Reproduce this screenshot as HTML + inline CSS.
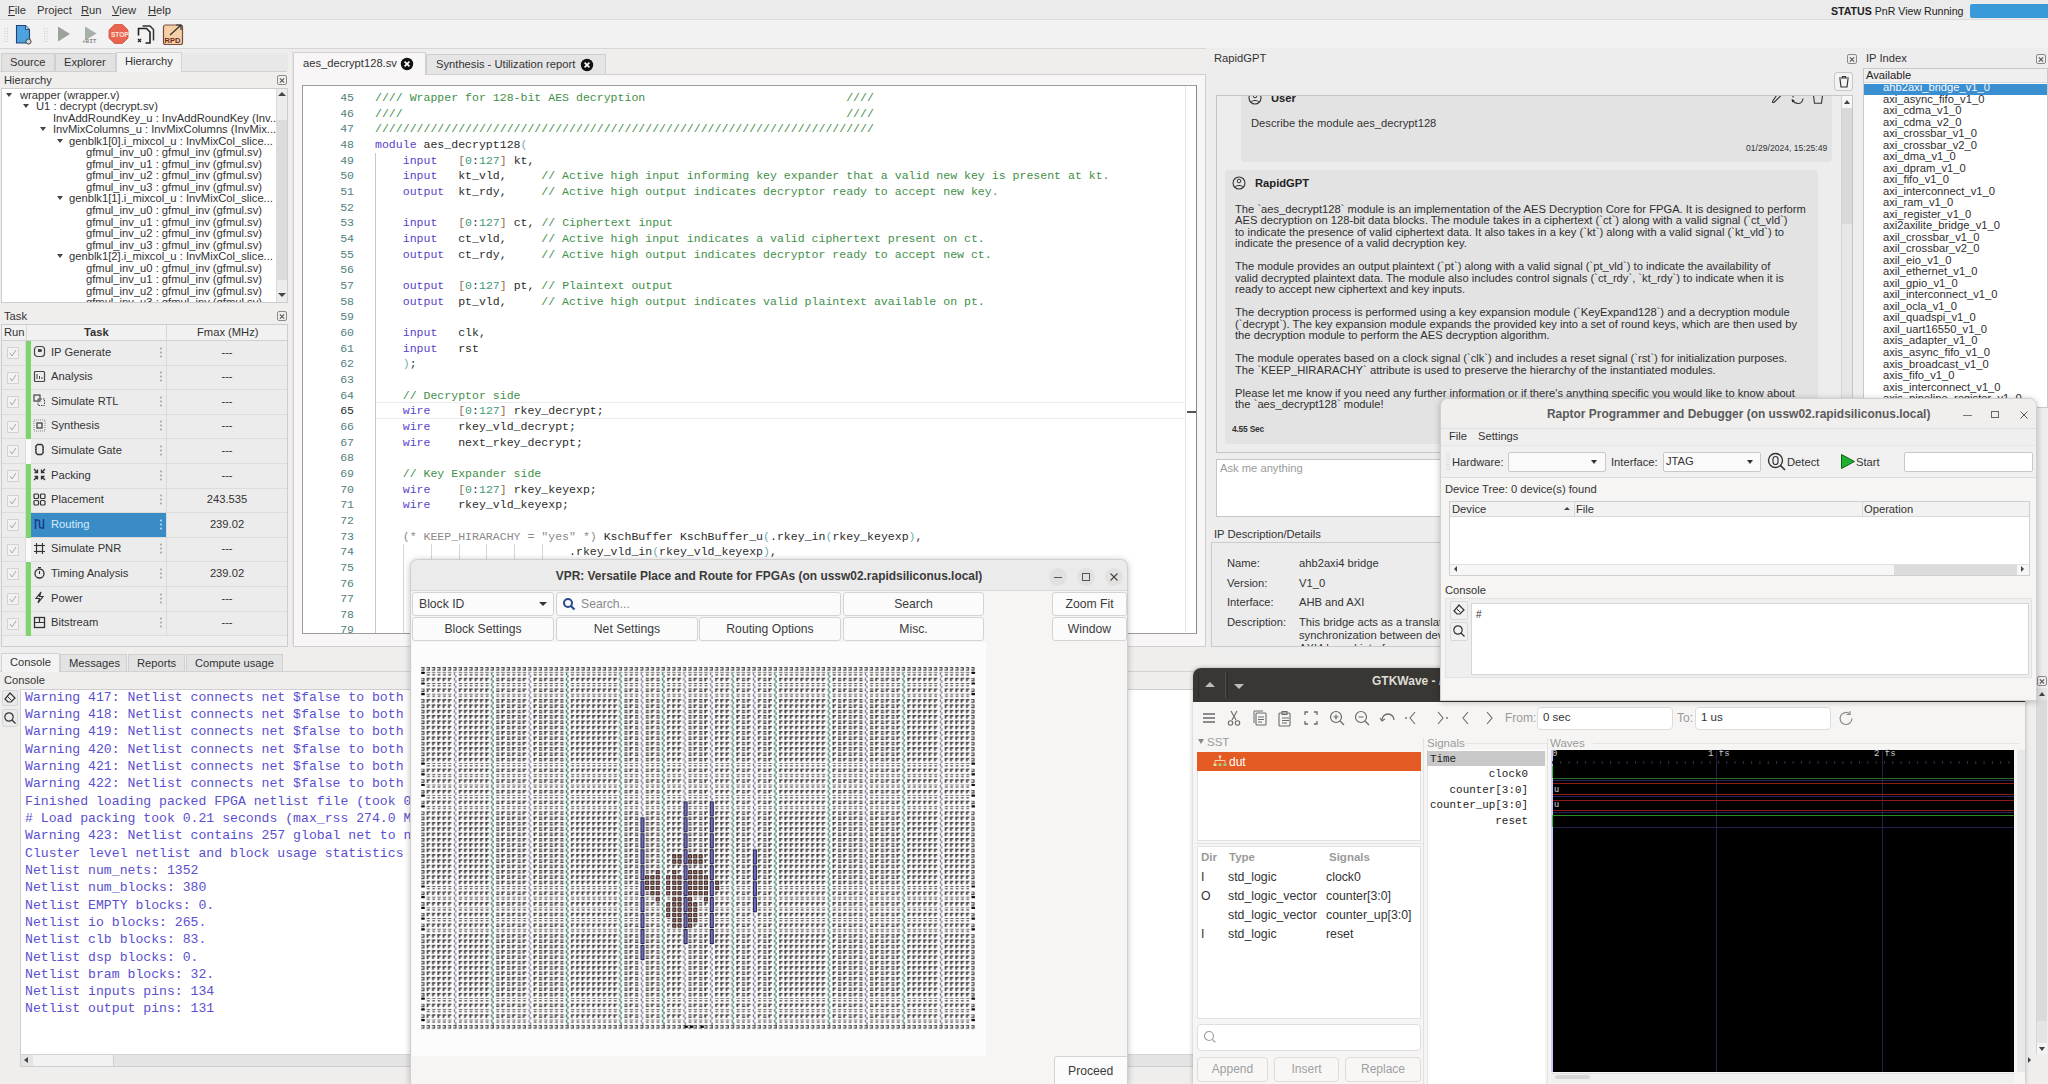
<!DOCTYPE html>
<html><head><meta charset="utf-8">
<style>
*{box-sizing:border-box;margin:0;padding:0}
html,body{width:2048px;height:1084px;overflow:hidden;background:#efeeed;font-family:"Liberation Sans",sans-serif;font-size:11.2px;color:#333}
.a{position:absolute}
.t{position:absolute;white-space:pre;line-height:1}
.mono{font-family:"Liberation Mono",monospace}
.box{position:absolute;background:#fff;border:1px solid #c9c9c9}
.xbtn{position:absolute;width:10px;height:10px;border:1px solid #8a8a8a;border-radius:2px}
.xbtn:before,.xbtn:after{content:"";position:absolute;left:1px;top:3.5px;width:6px;height:1px;background:#555;transform:rotate(45deg)}
.xbtn:after{transform:rotate(-45deg)}
</style></head><body>

<!-- MENUBAR -->
<div class="a" style="left:0;top:0;width:2048px;height:20px;background:#ebebeb;border-bottom:1px solid #dcdcdc"></div>
<div class="t" style="left:8px;top:5px"><u>F</u>ile</div>
<div class="t" style="left:37px;top:5px">Project</div>
<div class="t" style="left:81px;top:5px"><u>R</u>un</div>
<div class="t" style="left:112px;top:5px"><u>V</u>iew</div>
<div class="t" style="left:148px;top:5px"><u>H</u>elp</div>
<div class="t" style="left:1831px;top:5.5px;font-size:10.6px;color:#222"><b>STATUS</b> PnR View Running</div>
<div class="a" style="left:1970px;top:4px;width:78px;height:14px;background:#3a9ad9;border-radius:2px 0 0 2px"></div>

<!-- TOOLBAR -->
<div class="a" style="left:0;top:20px;width:2048px;height:29px;background:#f3f2f2;border-bottom:1px solid #d6d6d6"></div>
<svg class="a" style="left:0;top:20px" width="200" height="28">
<path d="M5 8v14M7.5 8v14" stroke="#c9c9c9" stroke-width="1" stroke-dasharray="1 1.6"/>
<path d="M16.5 5.5h9l4 4v13.5h-13z" fill="#4ba4de" stroke="#263f77" stroke-width="1.1"/>
<path d="M25.5 5.5v4h4" fill="#9fd0f0" stroke="#263f77" stroke-width="0.9"/>
<circle cx="28.5" cy="21.5" r="2.6" fill="#cfd6d8" stroke="#444" stroke-width="1"/>
<path d="M44.5 8v14M47 8v14" stroke="#c9c9c9" stroke-width="1" stroke-dasharray="1 1.6"/>
<path d="M58 6.5l12 7.5-12 7.5z" fill="#9aa29a"/>
<path d="M85 6.5l11.5 7-11.5 7z" fill="#a6b0a6"/>
<text x="82" y="23" font-family="Liberation Mono" font-size="6" font-weight="bold" fill="#8a8a8a">+BIT</text>
<path d="M114.5 4.5h8l5.5 5.5v8l-5.5 5.5h-8l-5.5-5.5v-8z" fill="#e86450" stroke="#d4503e" stroke-width="0.8"/>
<text x="111" y="16.5" font-family="Liberation Sans" font-size="6.5" font-weight="bold" fill="#fde6e0">STOP</text>
<path d="M142.5 6h7.5l3.5 3.5v11" fill="none" stroke="#333" stroke-width="1.5"/>
<path d="M138.5 15.5v-7h8l3.5 3.5v11h-4.5" fill="none" stroke="#222" stroke-width="1.6"/>
<path d="M138 19l3 3M141 19l-3 3" stroke="#222" stroke-width="1.3"/>
<rect x="163.5" y="5" width="19" height="19.5" rx="2" fill="#f5cfa6" stroke="#7a4e3e" stroke-width="1.2"/>
<path d="M170 15l11-10M176 5h5v5" fill="none" stroke="#333" stroke-width="1.2"/>
<text x="164.5" y="22.5" font-family="Liberation Sans" font-size="7.5" font-weight="bold" fill="#6a2a1a">RPD</text>
</svg>

<!-- LEFT PANEL -->
<!-- LEFT PANEL -->
<div class="a" style="left:0;top:50px;width:293px;height:594px;background:#efeeed;border-right:1px solid #e2e2e2"></div>
<!-- tabs -->
<div class="a" style="left:182px;top:53px;width:106px;height:18px;background:#e9e8e8"></div><div class="a" style="left:0;top:71px;width:287px;height:1px;background:#d0d0d0"></div>
<div class="a" style="left:1px;top:53px;width:54px;height:18px;background:#e2e2e2;border:1px solid #cfcfcf;border-bottom:none"></div>
<div class="a" style="left:55px;top:53px;width:61px;height:18px;background:#e2e2e2;border:1px solid #cfcfcf;border-bottom:none"></div>
<div class="a" style="left:116px;top:52px;width:66px;height:20px;background:#f3f2f2;border:1px solid #d3d3d3;border-bottom:none"></div>
<div class="t" style="left:10px;top:57px">Source</div>
<div class="t" style="left:64px;top:57px">Explorer</div>
<div class="t" style="left:125px;top:56px">Hierarchy</div>
<div class="t" style="left:4px;top:75px">Hierarchy</div>
<div class="xbtn" style="left:277px;top:75px"></div>
<!-- tree -->
<div class="box" style="left:1px;top:88px;width:287px;height:215px;border-color:#cdcdcd"></div>
<div class="a" style="left:276px;top:89px;width:11px;height:213px;background:#ececec;border-left:1px solid #dcdcdc"></div>
<div class="a" style="left:277px;top:120px;width:10px;height:160px;background:#dcdcdc"></div>
<div class="a" style="left:278px;top:92px;width:0;height:0;border-left:4px solid transparent;border-right:4px solid transparent;border-bottom:4px solid #444"></div>
<div class="a" style="left:278px;top:293px;width:0;height:0;border-left:4px solid transparent;border-right:4px solid transparent;border-top:4px solid #444"></div>
<div id="tree" class="a" style="left:2px;top:89px;width:274px;height:213px;overflow:hidden;color:#333;font-size:11.2px">
<div class="t" style="left:18px;top:0.5px">wrapper (wrapper.v)</div>
<div class="a" style="left:4px;top:3.5px;border-left:3.5px solid transparent;border-right:3.5px solid transparent;border-top:4px solid #444"></div>
<div class="t" style="left:34px;top:12.0px">U1 : decrypt (decrypt.sv)</div>
<div class="a" style="left:21px;top:15.0px;border-left:3.5px solid transparent;border-right:3.5px solid transparent;border-top:4px solid #444"></div>
<div class="t" style="left:51px;top:23.6px">InvAddRoundKey_u : InvAddRoundKey (Inv...</div>
<div class="t" style="left:51px;top:35.2px">InvMixColumns_u : InvMixColumns (InvMix...</div>
<div class="a" style="left:38px;top:38.2px;border-left:3.5px solid transparent;border-right:3.5px solid transparent;border-top:4px solid #444"></div>
<div class="t" style="left:67px;top:46.7px">genblk1[0].i_mixcol_u : InvMixCol_slice...</div>
<div class="a" style="left:55px;top:49.7px;border-left:3.5px solid transparent;border-right:3.5px solid transparent;border-top:4px solid #444"></div>
<div class="t" style="left:84px;top:58.2px">gfmul_inv_u0 : gfmul_inv (gfmul.sv)</div>
<div class="t" style="left:84px;top:69.8px">gfmul_inv_u1 : gfmul_inv (gfmul.sv)</div>
<div class="t" style="left:84px;top:81.4px">gfmul_inv_u2 : gfmul_inv (gfmul.sv)</div>
<div class="t" style="left:84px;top:92.9px">gfmul_inv_u3 : gfmul_inv (gfmul.sv)</div>
<div class="t" style="left:67px;top:104.4px">genblk1[1].i_mixcol_u : InvMixCol_slice...</div>
<div class="a" style="left:55px;top:107.4px;border-left:3.5px solid transparent;border-right:3.5px solid transparent;border-top:4px solid #444"></div>
<div class="t" style="left:84px;top:116.0px">gfmul_inv_u0 : gfmul_inv (gfmul.sv)</div>
<div class="t" style="left:84px;top:127.6px">gfmul_inv_u1 : gfmul_inv (gfmul.sv)</div>
<div class="t" style="left:84px;top:139.1px">gfmul_inv_u2 : gfmul_inv (gfmul.sv)</div>
<div class="t" style="left:84px;top:150.7px">gfmul_inv_u3 : gfmul_inv (gfmul.sv)</div>
<div class="t" style="left:67px;top:162.2px">genblk1[2].i_mixcol_u : InvMixCol_slice...</div>
<div class="a" style="left:55px;top:165.2px;border-left:3.5px solid transparent;border-right:3.5px solid transparent;border-top:4px solid #444"></div>
<div class="t" style="left:84px;top:173.8px">gfmul_inv_u0 : gfmul_inv (gfmul.sv)</div>
<div class="t" style="left:84px;top:185.3px">gfmul_inv_u1 : gfmul_inv (gfmul.sv)</div>
<div class="t" style="left:84px;top:196.9px">gfmul_inv_u2 : gfmul_inv (gfmul.sv)</div>
<div class="t" style="left:84px;top:208.4px">gfmul_inv_u3 : gfmul_inv (gfmul.sv)</div>
</div>
<!-- task dock -->
<div class="t" style="left:4px;top:311px">Task</div>
<div class="xbtn" style="left:277px;top:311px"></div>
<div class="a" style="left:1px;top:324px;width:287px;height:323px;background:#efefef;border:1px solid #cdcdcd"></div>
<div class="a" style="left:2px;top:325px;width:285px;height:16px;background:#f1f1f1;border-bottom:1px solid #d0d0d0"></div>
<div class="a" style="left:26px;top:325px;width:1px;height:16px;background:#d6d6d6"></div>
<div class="a" style="left:166px;top:325px;width:1px;height:16px;background:#d6d6d6"></div>
<div class="t" style="left:4px;top:327px">Run</div>
<div class="t" style="left:84px;top:327px;font-weight:bold">Task</div>
<div class="t" style="left:197px;top:327px">Fmax (MHz)</div>
<div class="a" style="left:2px;top:341.0px;width:285px;height:24.6px;background:#ececec;border-bottom:1px solid #dcdcdc"></div>
<div class="a" style="left:25px;top:341.0px;width:1px;height:24.6px;background:#dadada"></div>
<div class="a" style="left:166px;top:341.0px;width:1px;height:24.6px;background:#dadada"></div>
<div class="a" style="left:7px;top:347.0px;width:12px;height:12px;background:#f2f2f2;border:1px solid #d2d2d2;border-radius:1px"></div>
<svg class="a" style="left:8px;top:348.0px" width="10" height="10"><path d="M2 5l2 3l4-6" stroke="#a8a8a8" stroke-width="1" fill="none"/></svg>
<div class="a" style="left:26px;top:341.0px;width:5px;height:24.6px;background:#7fd56b"></div>
<svg class="a" style="left:33px;top:345.0px" width="13" height="13"><rect x="1.5" y="1.5" width="10" height="10" rx="3" fill="none" stroke="#444" stroke-width="1.2"/><path d="M5 4h2.5a1.5 1.5 0 0 1 0 3H5z" fill="#444"/></svg>
<div class="t" style="left:51px;top:346.5px;">IP Generate</div>
<svg class="a" style="left:159px;top:346.5px" width="4" height="12"><circle cx="2" cy="1.5" r="0.9" fill="#999"/><circle cx="2" cy="5.5" r="0.9" fill="#999"/><circle cx="2" cy="9.5" r="0.9" fill="#999"/></svg>
<div class="t" style="left:167px;width:120px;text-align:center;top:346.5px">---</div>
<div class="a" style="left:2px;top:365.6px;width:285px;height:24.6px;background:#ececec;border-bottom:1px solid #dcdcdc"></div>
<div class="a" style="left:25px;top:365.6px;width:1px;height:24.6px;background:#dadada"></div>
<div class="a" style="left:166px;top:365.6px;width:1px;height:24.6px;background:#dadada"></div>
<div class="a" style="left:7px;top:371.6px;width:12px;height:12px;background:#f2f2f2;border:1px solid #d2d2d2;border-radius:1px"></div>
<svg class="a" style="left:8px;top:372.6px" width="10" height="10"><path d="M2 5l2 3l4-6" stroke="#a8a8a8" stroke-width="1" fill="none"/></svg>
<div class="a" style="left:26px;top:365.6px;width:5px;height:24.6px;background:#7fd56b"></div>
<svg class="a" style="left:33px;top:369.6px" width="13" height="13"><rect x="1.5" y="1.5" width="10" height="10" rx="1" fill="none" stroke="#444" stroke-width="1.2"/><path d="M4 4v5M6.5 6v3M9 7v2" stroke="#444" stroke-width="1"/></svg>
<div class="t" style="left:51px;top:371.1px;">Analysis</div>
<svg class="a" style="left:159px;top:371.1px" width="4" height="12"><circle cx="2" cy="1.5" r="0.9" fill="#999"/><circle cx="2" cy="5.5" r="0.9" fill="#999"/><circle cx="2" cy="9.5" r="0.9" fill="#999"/></svg>
<div class="t" style="left:167px;width:120px;text-align:center;top:371.1px">---</div>
<div class="a" style="left:2px;top:390.2px;width:285px;height:24.6px;background:#ececec;border-bottom:1px solid #dcdcdc"></div>
<div class="a" style="left:25px;top:390.2px;width:1px;height:24.6px;background:#dadada"></div>
<div class="a" style="left:166px;top:390.2px;width:1px;height:24.6px;background:#dadada"></div>
<div class="a" style="left:7px;top:396.2px;width:12px;height:12px;background:#f2f2f2;border:1px solid #d2d2d2;border-radius:1px"></div>
<svg class="a" style="left:8px;top:397.2px" width="10" height="10"><path d="M2 5l2 3l4-6" stroke="#a8a8a8" stroke-width="1" fill="none"/></svg>
<div class="a" style="left:26px;top:390.2px;width:5px;height:24.6px;background:#7fd56b"></div>
<svg class="a" style="left:33px;top:394.2px" width="13" height="13"><rect x="1" y="1" width="6" height="6" fill="none" stroke="#444" stroke-width="1.2"/><rect x="5" y="5" width="6.5" height="6.5" fill="none" stroke="#444" stroke-width="1" stroke-dasharray="1.5 1"/></svg>
<div class="t" style="left:51px;top:395.7px;">Simulate RTL</div>
<svg class="a" style="left:159px;top:395.7px" width="4" height="12"><circle cx="2" cy="1.5" r="0.9" fill="#999"/><circle cx="2" cy="5.5" r="0.9" fill="#999"/><circle cx="2" cy="9.5" r="0.9" fill="#999"/></svg>
<div class="t" style="left:167px;width:120px;text-align:center;top:395.7px">---</div>
<div class="a" style="left:2px;top:414.8px;width:285px;height:24.6px;background:#ececec;border-bottom:1px solid #dcdcdc"></div>
<div class="a" style="left:25px;top:414.8px;width:1px;height:24.6px;background:#dadada"></div>
<div class="a" style="left:166px;top:414.8px;width:1px;height:24.6px;background:#dadada"></div>
<div class="a" style="left:7px;top:420.8px;width:12px;height:12px;background:#f2f2f2;border:1px solid #d2d2d2;border-radius:1px"></div>
<svg class="a" style="left:8px;top:421.8px" width="10" height="10"><path d="M2 5l2 3l4-6" stroke="#a8a8a8" stroke-width="1" fill="none"/></svg>
<div class="a" style="left:26px;top:414.8px;width:5px;height:24.6px;background:#7fd56b"></div>
<svg class="a" style="left:33px;top:418.8px" width="13" height="13"><rect x="1" y="1" width="11" height="11" fill="none" stroke="#888" stroke-width="1" stroke-dasharray="1 1"/><rect x="4" y="4" width="5" height="5" fill="none" stroke="#444" stroke-width="1.3"/></svg>
<div class="t" style="left:51px;top:420.3px;">Synthesis</div>
<svg class="a" style="left:159px;top:420.3px" width="4" height="12"><circle cx="2" cy="1.5" r="0.9" fill="#999"/><circle cx="2" cy="5.5" r="0.9" fill="#999"/><circle cx="2" cy="9.5" r="0.9" fill="#999"/></svg>
<div class="t" style="left:167px;width:120px;text-align:center;top:420.3px">---</div>
<div class="a" style="left:2px;top:439.4px;width:285px;height:24.6px;background:#ececec;border-bottom:1px solid #dcdcdc"></div>
<div class="a" style="left:25px;top:439.4px;width:1px;height:24.6px;background:#dadada"></div>
<div class="a" style="left:166px;top:439.4px;width:1px;height:24.6px;background:#dadada"></div>
<div class="a" style="left:7px;top:445.4px;width:12px;height:12px;background:#f2f2f2;border:1px solid #d2d2d2;border-radius:1px"></div>
<svg class="a" style="left:8px;top:446.4px" width="10" height="10"><path d="M2 5l2 3l4-6" stroke="#a8a8a8" stroke-width="1" fill="none"/></svg>
<div class="a" style="left:26px;top:439.4px;width:5px;height:24.6px;background:#fafafa"></div>
<svg class="a" style="left:33px;top:443.4px" width="13" height="13"><path d="M4.5 1.5h4l1.5 1.5v7l-1.5 1.5h-4l-1.5-1.5v-7z" stroke="#333" stroke-width="1.3" fill="none"/><path d="M2 4h1M2 6.5h1M2 9h1M10 4h1M10 6.5h1M10 9h1" stroke="#333" stroke-width="1"/></svg>
<div class="t" style="left:51px;top:444.9px;">Simulate Gate</div>
<svg class="a" style="left:159px;top:444.9px" width="4" height="12"><circle cx="2" cy="1.5" r="0.9" fill="#999"/><circle cx="2" cy="5.5" r="0.9" fill="#999"/><circle cx="2" cy="9.5" r="0.9" fill="#999"/></svg>
<div class="t" style="left:167px;width:120px;text-align:center;top:444.9px">---</div>
<div class="a" style="left:2px;top:464.0px;width:285px;height:24.6px;background:#ececec;border-bottom:1px solid #dcdcdc"></div>
<div class="a" style="left:25px;top:464.0px;width:1px;height:24.6px;background:#dadada"></div>
<div class="a" style="left:166px;top:464.0px;width:1px;height:24.6px;background:#dadada"></div>
<div class="a" style="left:7px;top:470.0px;width:12px;height:12px;background:#f2f2f2;border:1px solid #d2d2d2;border-radius:1px"></div>
<svg class="a" style="left:8px;top:471.0px" width="10" height="10"><path d="M2 5l2 3l4-6" stroke="#a8a8a8" stroke-width="1" fill="none"/></svg>
<div class="a" style="left:26px;top:464.0px;width:5px;height:24.6px;background:#7fd56b"></div>
<svg class="a" style="left:33px;top:468.0px" width="13" height="13"><path d="M1 1l3.5 3.5M12 1L8.5 4.5M1 12l3.5-3.5M12 12L8.5 8.5M1.5 4.5h3v-3M11.5 4.5h-3v-3M1.5 8.5h3v3M11.5 8.5h-3v3" stroke="#333" stroke-width="1.3" fill="none"/></svg>
<div class="t" style="left:51px;top:469.5px;">Packing</div>
<svg class="a" style="left:159px;top:469.5px" width="4" height="12"><circle cx="2" cy="1.5" r="0.9" fill="#999"/><circle cx="2" cy="5.5" r="0.9" fill="#999"/><circle cx="2" cy="9.5" r="0.9" fill="#999"/></svg>
<div class="t" style="left:167px;width:120px;text-align:center;top:469.5px">---</div>
<div class="a" style="left:2px;top:488.6px;width:285px;height:24.6px;background:#ececec;border-bottom:1px solid #dcdcdc"></div>
<div class="a" style="left:25px;top:488.6px;width:1px;height:24.6px;background:#dadada"></div>
<div class="a" style="left:166px;top:488.6px;width:1px;height:24.6px;background:#dadada"></div>
<div class="a" style="left:7px;top:494.6px;width:12px;height:12px;background:#f2f2f2;border:1px solid #d2d2d2;border-radius:1px"></div>
<svg class="a" style="left:8px;top:495.6px" width="10" height="10"><path d="M2 5l2 3l4-6" stroke="#a8a8a8" stroke-width="1" fill="none"/></svg>
<div class="a" style="left:26px;top:488.6px;width:5px;height:24.6px;background:#7fd56b"></div>
<svg class="a" style="left:33px;top:492.6px" width="13" height="13"><rect x="1" y="1" width="4.5" height="4.5" rx="1" fill="none" stroke="#333" stroke-width="1.2"/><rect x="7.5" y="1" width="4.5" height="4.5" rx="1" fill="none" stroke="#333" stroke-width="1.2"/><rect x="1" y="7.5" width="4.5" height="4.5" rx="1" fill="none" stroke="#333" stroke-width="1.2"/><rect x="7.5" y="7.5" width="4.5" height="4.5" rx="1" fill="none" stroke="#333" stroke-width="1.2"/></svg>
<div class="t" style="left:51px;top:494.1px;">Placement</div>
<svg class="a" style="left:159px;top:494.1px" width="4" height="12"><circle cx="2" cy="1.5" r="0.9" fill="#999"/><circle cx="2" cy="5.5" r="0.9" fill="#999"/><circle cx="2" cy="9.5" r="0.9" fill="#999"/></svg>
<div class="t" style="left:167px;width:120px;text-align:center;top:494.1px">243.535</div>
<div class="a" style="left:2px;top:513.2px;width:285px;height:24.6px;background:#ececec;border-bottom:1px solid #dcdcdc"></div>
<div class="a" style="left:25px;top:513.2px;width:1px;height:24.6px;background:#dadada"></div>
<div class="a" style="left:166px;top:513.2px;width:1px;height:24.6px;background:#dadada"></div>
<div class="a" style="left:7px;top:519.2px;width:12px;height:12px;background:#f2f2f2;border:1px solid #d2d2d2;border-radius:1px"></div>
<svg class="a" style="left:8px;top:520.2px" width="10" height="10"><path d="M2 5l2 3l4-6" stroke="#a8a8a8" stroke-width="1" fill="none"/></svg>
<div class="a" style="left:26px;top:513.2px;width:5px;height:24.6px;background:#7fd56b"></div>
<div class="a" style="left:31px;top:513.2px;width:135px;height:24px;background:#3a8cc6"></div>
<svg class="a" style="left:33px;top:517.2px" width="13" height="13"><path d="M2.5 12V5a2 2 0 0 1 4 0v4a2 2 0 0 0 4 0V2M2.5 5V2M10.5 12V9" stroke="#1a3f8a" stroke-width="1.5" fill="none"/></svg>
<div class="t" style="left:51px;top:518.7px;color:#d6ebff">Routing</div>
<svg class="a" style="left:159px;top:518.7px" width="4" height="12"><circle cx="2" cy="1.5" r="0.9" fill="#cfe3f5"/><circle cx="2" cy="5.5" r="0.9" fill="#cfe3f5"/><circle cx="2" cy="9.5" r="0.9" fill="#cfe3f5"/></svg>
<div class="t" style="left:167px;width:120px;text-align:center;top:518.7px">239.02</div>
<div class="a" style="left:2px;top:537.8px;width:285px;height:24.6px;background:#ececec;border-bottom:1px solid #dcdcdc"></div>
<div class="a" style="left:25px;top:537.8px;width:1px;height:24.6px;background:#dadada"></div>
<div class="a" style="left:166px;top:537.8px;width:1px;height:24.6px;background:#dadada"></div>
<div class="a" style="left:7px;top:543.8px;width:12px;height:12px;background:#f2f2f2;border:1px solid #d2d2d2;border-radius:1px"></div>
<svg class="a" style="left:8px;top:544.8px" width="10" height="10"><path d="M2 5l2 3l4-6" stroke="#a8a8a8" stroke-width="1" fill="none"/></svg>
<div class="a" style="left:26px;top:537.8px;width:5px;height:24.6px;background:#fafafa"></div>
<svg class="a" style="left:33px;top:541.8px" width="13" height="13"><rect x="3.5" y="3.5" width="6" height="6" fill="none" stroke="#333" stroke-width="1.2"/><path d="M1 3.5h2.5M9.5 3.5H12M1 9.5h2.5M9.5 9.5H12M3.5 1v2.5M9.5 1v2.5M3.5 9.5V12M9.5 9.5V12" stroke="#333" stroke-width="1.1"/></svg>
<div class="t" style="left:51px;top:543.3px;">Simulate PNR</div>
<svg class="a" style="left:159px;top:543.3px" width="4" height="12"><circle cx="2" cy="1.5" r="0.9" fill="#999"/><circle cx="2" cy="5.5" r="0.9" fill="#999"/><circle cx="2" cy="9.5" r="0.9" fill="#999"/></svg>
<div class="t" style="left:167px;width:120px;text-align:center;top:543.3px">---</div>
<div class="a" style="left:2px;top:562.4px;width:285px;height:24.6px;background:#ececec;border-bottom:1px solid #dcdcdc"></div>
<div class="a" style="left:25px;top:562.4px;width:1px;height:24.6px;background:#dadada"></div>
<div class="a" style="left:166px;top:562.4px;width:1px;height:24.6px;background:#dadada"></div>
<div class="a" style="left:7px;top:568.4px;width:12px;height:12px;background:#f2f2f2;border:1px solid #d2d2d2;border-radius:1px"></div>
<svg class="a" style="left:8px;top:569.4px" width="10" height="10"><path d="M2 5l2 3l4-6" stroke="#a8a8a8" stroke-width="1" fill="none"/></svg>
<div class="a" style="left:26px;top:562.4px;width:5px;height:24.6px;background:#7fd56b"></div>
<svg class="a" style="left:33px;top:566.4px" width="13" height="13"><circle cx="6.5" cy="7.5" r="4.5" fill="none" stroke="#333" stroke-width="1.3"/><path d="M5 1.5h3M6.5 5v3" stroke="#333" stroke-width="1.2"/></svg>
<div class="t" style="left:51px;top:567.9px;">Timing Analysis</div>
<svg class="a" style="left:159px;top:567.9px" width="4" height="12"><circle cx="2" cy="1.5" r="0.9" fill="#999"/><circle cx="2" cy="5.5" r="0.9" fill="#999"/><circle cx="2" cy="9.5" r="0.9" fill="#999"/></svg>
<div class="t" style="left:167px;width:120px;text-align:center;top:567.9px">239.02</div>
<div class="a" style="left:2px;top:587.0px;width:285px;height:24.6px;background:#ececec;border-bottom:1px solid #dcdcdc"></div>
<div class="a" style="left:25px;top:587.0px;width:1px;height:24.6px;background:#dadada"></div>
<div class="a" style="left:166px;top:587.0px;width:1px;height:24.6px;background:#dadada"></div>
<div class="a" style="left:7px;top:593.0px;width:12px;height:12px;background:#f2f2f2;border:1px solid #d2d2d2;border-radius:1px"></div>
<svg class="a" style="left:8px;top:594.0px" width="10" height="10"><path d="M2 5l2 3l4-6" stroke="#a8a8a8" stroke-width="1" fill="none"/></svg>
<div class="a" style="left:26px;top:587.0px;width:5px;height:24.6px;background:#7fd56b"></div>
<svg class="a" style="left:33px;top:591.0px" width="13" height="13"><path d="M8 1L3 7.5h3.5L5 12l5-6.5H6.5z" fill="none" stroke="#333" stroke-width="1.2"/></svg>
<div class="t" style="left:51px;top:592.5px;">Power</div>
<svg class="a" style="left:159px;top:592.5px" width="4" height="12"><circle cx="2" cy="1.5" r="0.9" fill="#999"/><circle cx="2" cy="5.5" r="0.9" fill="#999"/><circle cx="2" cy="9.5" r="0.9" fill="#999"/></svg>
<div class="t" style="left:167px;width:120px;text-align:center;top:592.5px">---</div>
<div class="a" style="left:2px;top:611.6px;width:285px;height:24.6px;background:#ececec;border-bottom:1px solid #dcdcdc"></div>
<div class="a" style="left:25px;top:611.6px;width:1px;height:24.6px;background:#dadada"></div>
<div class="a" style="left:166px;top:611.6px;width:1px;height:24.6px;background:#dadada"></div>
<div class="a" style="left:7px;top:617.6px;width:12px;height:12px;background:#f2f2f2;border:1px solid #d2d2d2;border-radius:1px"></div>
<svg class="a" style="left:8px;top:618.6px" width="10" height="10"><path d="M2 5l2 3l4-6" stroke="#a8a8a8" stroke-width="1" fill="none"/></svg>
<div class="a" style="left:26px;top:611.6px;width:5px;height:24.6px;background:#7fd56b"></div>
<svg class="a" style="left:33px;top:615.6px" width="13" height="13"><rect x="1.5" y="1.5" width="10" height="10" fill="none" stroke="#333" stroke-width="1.3"/><path d="M1.5 6.5h10M6.5 1.5v5" stroke="#333" stroke-width="1.2"/></svg>
<div class="t" style="left:51px;top:617.1px;">Bitstream</div>
<svg class="a" style="left:159px;top:617.1px" width="4" height="12"><circle cx="2" cy="1.5" r="0.9" fill="#999"/><circle cx="2" cy="5.5" r="0.9" fill="#999"/><circle cx="2" cy="9.5" r="0.9" fill="#999"/></svg>
<div class="t" style="left:167px;width:120px;text-align:center;top:617.1px">---</div>


<!-- EDITOR -->
<div class="a" style="left:293px;top:74px;width:913px;height:573px;background:#f8f6f7;border:1px solid #cfcfcf"></div>
<div class="a" style="left:293px;top:52px;width:133px;height:23px;background:#f8f6f7;border:1px solid #cfcfcf;border-bottom:none;border-radius:2px 2px 0 0"></div>
<div class="a" style="left:426px;top:54px;width:180px;height:20px;background:#e6e5e5;border:1px solid #d0d0d0;border-bottom:none"></div>
<div class="t" style="left:303px;top:58px">aes_decrypt128.sv</div>
<div class="t" style="left:436px;top:59px">Synthesis - Utilization report</div>
<svg class="a" style="left:400px;top:57px" width="14" height="14"><circle cx="7" cy="7" r="6.2" fill="#111"/><path d="M4.6 4.6l4.8 4.8M9.4 4.6l-4.8 4.8" stroke="#fff" stroke-width="1.6"/></svg>
<svg class="a" style="left:580px;top:57.5px" width="14" height="14"><circle cx="7" cy="7" r="6.2" fill="#111"/><path d="M4.6 4.6l4.8 4.8M9.4 4.6l-4.8 4.8" stroke="#fff" stroke-width="1.6"/></svg>
<div class="a" style="left:302px;top:85px;width:895px;height:549px;background:#fff;border:1px solid #9d9d9d;border-right-color:#888;overflow:hidden">
<div class="a" style="left:882px;top:0;width:1px;height:546px;background:#e4e4e4"></div>
<div class="a" style="left:884px;top:325px;width:10px;height:2px;background:#555"></div>
<div class="a" style="left:72px;top:316.2px;width:810px;height:16.7px;border-top:1px solid #ececec;border-bottom:1px solid #ececec"></div>
<div class="a" style="left:72px;top:66.6px;width:1px;height:485.5px;background:#c8c8c8"></div>
<div class="t mono" style="left:0;width:51px;text-align:right;top:-11.7px;font-size:11.55px;line-height:15.66px;color:#54807f">44</div>
<div class="t mono" style="left:72px;top:-11.7px;font-size:11.55px;line-height:15.66px;color:#3f8f4a">////                                                                ////</div>
<div class="t mono" style="left:0;width:51px;text-align:right;top:4.0px;font-size:11.55px;line-height:15.66px;color:#54807f">45</div>
<div class="t mono" style="left:72px;top:4.0px;font-size:11.55px;line-height:15.66px"><span style="color:#3f8f4a">//// Wrapper for 128-bit AES decryption                             ////</span></div>
<div class="t mono" style="left:0;width:51px;text-align:right;top:19.7px;font-size:11.55px;line-height:15.66px;color:#54807f">46</div>
<div class="t mono" style="left:72px;top:19.7px;font-size:11.55px;line-height:15.66px"><span style="color:#3f8f4a">////                                                                ////</span></div>
<div class="t mono" style="left:0;width:51px;text-align:right;top:35.3px;font-size:11.55px;line-height:15.66px;color:#54807f">47</div>
<div class="t mono" style="left:72px;top:35.3px;font-size:11.55px;line-height:15.66px"><span style="color:#3f8f4a">////////////////////////////////////////////////////////////////////////</span></div>
<div class="t mono" style="left:0;width:51px;text-align:right;top:51.0px;font-size:11.55px;line-height:15.66px;color:#54807f">48</div>
<div class="t mono" style="left:72px;top:51.0px;font-size:11.55px;line-height:15.66px"><span style="color:#5a3fc8">module</span><span style="color:#2b2b2b"> aes_decrypt128</span><span style="color:#6fb0b0">(</span></div>
<div class="t mono" style="left:0;width:51px;text-align:right;top:66.6px;font-size:11.55px;line-height:15.66px;color:#54807f">49</div>
<div class="t mono" style="left:72px;top:66.6px;font-size:11.55px;line-height:15.66px"><span style="color:#2b2b2b">    </span><span style="color:#5a3fc8">input</span><span style="color:#2b2b2b">   </span><span style="color:#9a6a4a">[</span><span style="color:#3f9a78">0</span><span style="color:#2b2b2b">:</span><span style="color:#3f9a78">127</span><span style="color:#9a6a4a">]</span><span style="color:#2b2b2b"> kt,</span></div>
<div class="t mono" style="left:0;width:51px;text-align:right;top:82.3px;font-size:11.55px;line-height:15.66px;color:#54807f">50</div>
<div class="t mono" style="left:72px;top:82.3px;font-size:11.55px;line-height:15.66px"><span style="color:#2b2b2b">    </span><span style="color:#5a3fc8">input</span><span style="color:#2b2b2b">   kt_vld,     </span><span style="color:#3f8f4a">// Active high input informing key expander that a valid new key is present at kt.</span></div>
<div class="t mono" style="left:0;width:51px;text-align:right;top:98.0px;font-size:11.55px;line-height:15.66px;color:#54807f">51</div>
<div class="t mono" style="left:72px;top:98.0px;font-size:11.55px;line-height:15.66px"><span style="color:#2b2b2b">    </span><span style="color:#5a3fc8">output</span><span style="color:#2b2b2b">  kt_rdy,     </span><span style="color:#3f8f4a">// Active high output indicates decryptor ready to accept new key.</span></div>
<div class="t mono" style="left:0;width:51px;text-align:right;top:113.6px;font-size:11.55px;line-height:15.66px;color:#54807f">52</div>
<div class="t mono" style="left:0;width:51px;text-align:right;top:129.3px;font-size:11.55px;line-height:15.66px;color:#54807f">53</div>
<div class="t mono" style="left:72px;top:129.3px;font-size:11.55px;line-height:15.66px"><span style="color:#2b2b2b">    </span><span style="color:#5a3fc8">input</span><span style="color:#2b2b2b">   </span><span style="color:#9a6a4a">[</span><span style="color:#3f9a78">0</span><span style="color:#2b2b2b">:</span><span style="color:#3f9a78">127</span><span style="color:#9a6a4a">]</span><span style="color:#2b2b2b"> ct, </span><span style="color:#3f8f4a">// Ciphertext input</span></div>
<div class="t mono" style="left:0;width:51px;text-align:right;top:144.9px;font-size:11.55px;line-height:15.66px;color:#54807f">54</div>
<div class="t mono" style="left:72px;top:144.9px;font-size:11.55px;line-height:15.66px"><span style="color:#2b2b2b">    </span><span style="color:#5a3fc8">input</span><span style="color:#2b2b2b">   ct_vld,     </span><span style="color:#3f8f4a">// Active high input indicates a valid ciphertext present on ct.</span></div>
<div class="t mono" style="left:0;width:51px;text-align:right;top:160.6px;font-size:11.55px;line-height:15.66px;color:#54807f">55</div>
<div class="t mono" style="left:72px;top:160.6px;font-size:11.55px;line-height:15.66px"><span style="color:#2b2b2b">    </span><span style="color:#5a3fc8">output</span><span style="color:#2b2b2b">  ct_rdy,     </span><span style="color:#3f8f4a">// Active high output indicates decryptor ready to accept new ct.</span></div>
<div class="t mono" style="left:0;width:51px;text-align:right;top:176.3px;font-size:11.55px;line-height:15.66px;color:#54807f">56</div>
<div class="t mono" style="left:0;width:51px;text-align:right;top:191.9px;font-size:11.55px;line-height:15.66px;color:#54807f">57</div>
<div class="t mono" style="left:72px;top:191.9px;font-size:11.55px;line-height:15.66px"><span style="color:#2b2b2b">    </span><span style="color:#5a3fc8">output</span><span style="color:#2b2b2b">  </span><span style="color:#9a6a4a">[</span><span style="color:#3f9a78">0</span><span style="color:#2b2b2b">:</span><span style="color:#3f9a78">127</span><span style="color:#9a6a4a">]</span><span style="color:#2b2b2b"> pt, </span><span style="color:#3f8f4a">// Plaintext output</span></div>
<div class="t mono" style="left:0;width:51px;text-align:right;top:207.6px;font-size:11.55px;line-height:15.66px;color:#54807f">58</div>
<div class="t mono" style="left:72px;top:207.6px;font-size:11.55px;line-height:15.66px"><span style="color:#2b2b2b">    </span><span style="color:#5a3fc8">output</span><span style="color:#2b2b2b">  pt_vld,     </span><span style="color:#3f8f4a">// Active high output indicates valid plaintext available on pt.</span></div>
<div class="t mono" style="left:0;width:51px;text-align:right;top:223.2px;font-size:11.55px;line-height:15.66px;color:#54807f">59</div>
<div class="t mono" style="left:0;width:51px;text-align:right;top:238.9px;font-size:11.55px;line-height:15.66px;color:#54807f">60</div>
<div class="t mono" style="left:72px;top:238.9px;font-size:11.55px;line-height:15.66px"><span style="color:#2b2b2b">    </span><span style="color:#5a3fc8">input</span><span style="color:#2b2b2b">   clk,</span></div>
<div class="t mono" style="left:0;width:51px;text-align:right;top:254.6px;font-size:11.55px;line-height:15.66px;color:#54807f">61</div>
<div class="t mono" style="left:72px;top:254.6px;font-size:11.55px;line-height:15.66px"><span style="color:#2b2b2b">    </span><span style="color:#5a3fc8">input</span><span style="color:#2b2b2b">   rst</span></div>
<div class="t mono" style="left:0;width:51px;text-align:right;top:270.2px;font-size:11.55px;line-height:15.66px;color:#54807f">62</div>
<div class="t mono" style="left:72px;top:270.2px;font-size:11.55px;line-height:15.66px"><span style="color:#2b2b2b">    </span><span style="color:#6fb0b0">)</span><span style="color:#2b2b2b">;</span></div>
<div class="t mono" style="left:0;width:51px;text-align:right;top:285.9px;font-size:11.55px;line-height:15.66px;color:#54807f">63</div>
<div class="t mono" style="left:0;width:51px;text-align:right;top:301.5px;font-size:11.55px;line-height:15.66px;color:#54807f">64</div>
<div class="t mono" style="left:72px;top:301.5px;font-size:11.55px;line-height:15.66px"><span style="color:#2b2b2b">    </span><span style="color:#3f8f4a">// Decryptor side</span></div>
<div class="t mono" style="left:0;width:51px;text-align:right;top:317.2px;font-size:11.55px;line-height:15.66px;color:#1f2f2f">65</div>
<div class="t mono" style="left:72px;top:317.2px;font-size:11.55px;line-height:15.66px"><span style="color:#2b2b2b">    </span><span style="color:#5a3fc8">wire</span><span style="color:#2b2b2b">    </span><span style="color:#9a6a4a">[</span><span style="color:#3f9a78">0</span><span style="color:#2b2b2b">:</span><span style="color:#3f9a78">127</span><span style="color:#9a6a4a">]</span><span style="color:#2b2b2b"> rkey_decrypt;</span></div>
<div class="t mono" style="left:0;width:51px;text-align:right;top:332.9px;font-size:11.55px;line-height:15.66px;color:#54807f">66</div>
<div class="t mono" style="left:72px;top:332.9px;font-size:11.55px;line-height:15.66px"><span style="color:#2b2b2b">    </span><span style="color:#5a3fc8">wire</span><span style="color:#2b2b2b">    rkey_vld_decrypt;</span></div>
<div class="t mono" style="left:0;width:51px;text-align:right;top:348.5px;font-size:11.55px;line-height:15.66px;color:#54807f">67</div>
<div class="t mono" style="left:72px;top:348.5px;font-size:11.55px;line-height:15.66px"><span style="color:#2b2b2b">    </span><span style="color:#5a3fc8">wire</span><span style="color:#2b2b2b">    next_rkey_decrypt;</span></div>
<div class="t mono" style="left:0;width:51px;text-align:right;top:364.2px;font-size:11.55px;line-height:15.66px;color:#54807f">68</div>
<div class="t mono" style="left:0;width:51px;text-align:right;top:379.8px;font-size:11.55px;line-height:15.66px;color:#54807f">69</div>
<div class="t mono" style="left:72px;top:379.8px;font-size:11.55px;line-height:15.66px"><span style="color:#2b2b2b">    </span><span style="color:#3f8f4a">// Key Expander side</span></div>
<div class="t mono" style="left:0;width:51px;text-align:right;top:395.5px;font-size:11.55px;line-height:15.66px;color:#54807f">70</div>
<div class="t mono" style="left:72px;top:395.5px;font-size:11.55px;line-height:15.66px"><span style="color:#2b2b2b">    </span><span style="color:#5a3fc8">wire</span><span style="color:#2b2b2b">    </span><span style="color:#9a6a4a">[</span><span style="color:#3f9a78">0</span><span style="color:#2b2b2b">:</span><span style="color:#3f9a78">127</span><span style="color:#9a6a4a">]</span><span style="color:#2b2b2b"> rkey_keyexp;</span></div>
<div class="t mono" style="left:0;width:51px;text-align:right;top:411.2px;font-size:11.55px;line-height:15.66px;color:#54807f">71</div>
<div class="t mono" style="left:72px;top:411.2px;font-size:11.55px;line-height:15.66px"><span style="color:#2b2b2b">    </span><span style="color:#5a3fc8">wire</span><span style="color:#2b2b2b">    rkey_vld_keyexp;</span></div>
<div class="t mono" style="left:0;width:51px;text-align:right;top:426.8px;font-size:11.55px;line-height:15.66px;color:#54807f">72</div>
<div class="t mono" style="left:0;width:51px;text-align:right;top:442.5px;font-size:11.55px;line-height:15.66px;color:#54807f">73</div>
<div class="t mono" style="left:72px;top:442.5px;font-size:11.55px;line-height:15.66px"><span style="color:#2b2b2b">    </span><span style="color:#8a8a8a">(* KEEP_HIRARACHY = &quot;yes&quot; *)</span><span style="color:#2b2b2b"> KschBuffer KschBuffer_u</span><span style="color:#6fb0b0">(</span><span style="color:#2b2b2b">.rkey_in</span><span style="color:#6fb0b0">(</span><span style="color:#2b2b2b">rkey_keyexp</span><span style="color:#6fb0b0">)</span><span style="color:#2b2b2b">,</span></div>
<div class="t mono" style="left:0;width:51px;text-align:right;top:458.1px;font-size:11.55px;line-height:15.66px;color:#54807f">74</div>
<div class="t mono" style="left:72px;top:458.1px;font-size:11.55px;line-height:15.66px"><span style="color:#2b2b2b">                            .rkey_vld_in</span><span style="color:#6fb0b0">(</span><span style="color:#2b2b2b">rkey_vld_keyexp</span><span style="color:#6fb0b0">)</span><span style="color:#2b2b2b">,</span></div>
<div class="t mono" style="left:0;width:51px;text-align:right;top:473.8px;font-size:11.55px;line-height:15.66px;color:#54807f">75</div>
<div class="t mono" style="left:0;width:51px;text-align:right;top:489.5px;font-size:11.55px;line-height:15.66px;color:#54807f">76</div>
<div class="t mono" style="left:0;width:51px;text-align:right;top:505.1px;font-size:11.55px;line-height:15.66px;color:#54807f">77</div>
<div class="t mono" style="left:0;width:51px;text-align:right;top:520.8px;font-size:11.55px;line-height:15.66px;color:#54807f">78</div>
<div class="t mono" style="left:0;width:51px;text-align:right;top:536.4px;font-size:11.55px;line-height:15.66px;color:#54807f">79</div>
<div class="a" style="left:100.0px;top:458.1px;width:1px;height:100.0px;background:#d6d6d6"></div>
<div class="a" style="left:127.8px;top:458.1px;width:1px;height:15.7px;background:#d6d6d6"></div>
<div class="a" style="left:155.6px;top:458.1px;width:1px;height:15.7px;background:#d6d6d6"></div>
<div class="a" style="left:183.4px;top:458.1px;width:1px;height:15.7px;background:#d6d6d6"></div>
<div class="a" style="left:211.2px;top:458.1px;width:1px;height:15.7px;background:#d6d6d6"></div>
<div class="a" style="left:239.0px;top:458.1px;width:1px;height:15.7px;background:#d6d6d6"></div>
</div>
<!-- RAPIDGPT -->
<div class="a" style="left:1206px;top:48px;width:656px;height:604px;background:#ededed"></div>
<div class="t" style="left:1214px;top:53px">RapidGPT</div>
<div class="xbtn" style="left:1847px;top:54px"></div>
<div class="a" style="left:1834px;top:72px;width:19px;height:19px;background:#f3f3f3;border:1px solid #c8c8c8;border-radius:3px"></div>
<svg class="a" style="left:1837px;top:74px" width="14" height="15"><path d="M3 5l1 8h6l1-8M2 4h10M5.5 4V2.5h3V4" fill="none" stroke="#333" stroke-width="1.2"/></svg>
<div class="a" style="left:1216px;top:95px;width:637px;height:358px;background:#ededed;border:1px solid #c6c6c6;overflow:hidden">
<div class="a" style="left:24px;top:-20px;width:591px;height:86px;background:#e3e3e3;border-radius:4px"></div>
<svg class="a" style="left:31px;top:-5px" width="14" height="14"><circle cx="7" cy="7" r="6" fill="none" stroke="#333" stroke-width="1.1"/><circle cx="7" cy="5" r="1.8" fill="none" stroke="#333" stroke-width="1"/><path d="M3.2 11c1-2 6.6-2 7.6 0" fill="none" stroke="#333" stroke-width="1"/></svg>
<div class="t" style="left:54px;top:-3px;font-weight:bold;color:#222">User</div>
<svg class="a" style="left:553px;top:-6px" width="70" height="16"><path d="M6.5 5.5L2.5 11.5Q2.3 13 4 12.4L11 5.5" fill="none" stroke="#333" stroke-width="1.1"/><path d="M23 10.5Q24.5 13.5 28 13.5Q32.5 13.5 33 8.5" fill="none" stroke="#333" stroke-width="1.1"/><path d="M21.5 9l3 1.2-2.2 2.2z" fill="#222"/><path d="M23 5.5v2" stroke="#333" stroke-width="1.1"/><path d="M43.5 5.5L44.5 13.2H51.5L52.5 5.5" fill="none" stroke="#333" stroke-width="1.1"/></svg>
<div class="t" style="left:34px;top:22px;color:#333">Describe the module aes_decrypt128</div>
<div class="t" style="left:529px;top:48px;font-size:8.6px;color:#333">01/29/2024, 15:25:49</div>
<div class="a" style="left:8px;top:74px;width:593px;height:274px;background:#e3e3e3;border-radius:4px"></div>
<svg class="a" style="left:15px;top:80px" width="14" height="14"><circle cx="7" cy="7" r="6" fill="none" stroke="#333" stroke-width="1.1"/><circle cx="7" cy="5" r="1.8" fill="none" stroke="#333" stroke-width="1"/><path d="M3.2 11c1-2 6.6-2 7.6 0" fill="none" stroke="#333" stroke-width="1"/></svg>
<div class="t" style="left:38px;top:82px;font-weight:bold;color:#222">RapidGPT</div>
<div class="t" style="left:18px;top:107.5px;color:#2f2f2f">The `aes_decrypt128` module is an implementation of the AES Decryption Core for FPGA. It is designed to perform</div>
<div class="t" style="left:18px;top:119.0px;color:#2f2f2f">AES decryption on 128-bit data blocks. The module takes in a ciphertext (`ct`) along with a valid signal (`ct_vld`)</div>
<div class="t" style="left:18px;top:130.5px;color:#2f2f2f">to indicate the presence of valid ciphertext data. It also takes in a key (`kt`) along with a valid signal (`kt_vld`) to</div>
<div class="t" style="left:18px;top:142.0px;color:#2f2f2f">indicate the presence of a valid decryption key.</div>
<div class="t" style="left:18px;top:165.0px;color:#2f2f2f">The module provides an output plaintext (`pt`) along with a valid signal (`pt_vld`) to indicate the availability of</div>
<div class="t" style="left:18px;top:176.5px;color:#2f2f2f">valid decrypted plaintext data. The module also includes control signals (`ct_rdy`, `kt_rdy`) to indicate when it is</div>
<div class="t" style="left:18px;top:188.0px;color:#2f2f2f">ready to accept new ciphertext and key inputs.</div>
<div class="t" style="left:18px;top:211.0px;color:#2f2f2f">The decryption process is performed using a key expansion module (`KeyExpand128`) and a decryption module</div>
<div class="t" style="left:18px;top:222.5px;color:#2f2f2f">(`decrypt`). The key expansion module expands the provided key into a set of round keys, which are then used by</div>
<div class="t" style="left:18px;top:234.0px;color:#2f2f2f">the decryption module to perform the AES decryption algorithm.</div>
<div class="t" style="left:18px;top:257.0px;color:#2f2f2f">The module operates based on a clock signal (`clk`) and includes a reset signal (`rst`) for initialization purposes.</div>
<div class="t" style="left:18px;top:268.5px;color:#2f2f2f">The `KEEP_HIRARACHY` attribute is used to preserve the hierarchy of the instantiated modules.</div>
<div class="t" style="left:18px;top:291.5px;color:#2f2f2f">Please let me know if you need any further information or if there&#x27;s anything specific you would like to know about</div>
<div class="t" style="left:18px;top:303.0px;color:#2f2f2f">the `aes_decrypt128` module!</div>
<div class="t" style="left:15px;top:329px;font-size:8.4px;color:#333;font-weight:bold;letter-spacing:-0.2px">4.55 Sec</div>
<div class="a" style="left:624px;top:0;width:12px;height:357px;background:#e6e6e6;border-left:1px solid #d4d4d4"></div>
<div class="a" style="left:625px;top:12px;width:11px;height:116px;background:#d9d9d9"></div>
<div class="a" style="left:625px;top:0;width:11px;height:12px;background:#f6f6f6"></div>
<div class="a" style="left:627px;top:4px;border-left:3.5px solid transparent;border-right:3.5px solid transparent;border-bottom:4px solid #444"></div>
</div>
<div class="a" style="left:1216px;top:459px;width:240px;height:58px;background:#fff;border:1px solid #c6c6c6"></div>
<div class="t" style="left:1220px;top:463px;color:#9a9a9a">Ask me anything</div>
<div class="t" style="left:1214px;top:529px">IP Description/Details</div>
<div class="a" style="left:1211px;top:542px;width:240px;height:105px;background:#ececec;border:1px solid #cbcbcb;overflow:hidden">
<div class="t" style="left:15px;top:15.0px;color:#333">Name:</div><div class="t" style="left:87px;top:15.0px;color:#333">ahb2axi4 bridge</div>
<div class="t" style="left:15px;top:34.7px;color:#333">Version:</div><div class="t" style="left:87px;top:34.7px;color:#333">V1_0</div>
<div class="t" style="left:15px;top:54.4px;color:#333">Interface:</div><div class="t" style="left:87px;top:54.4px;color:#333">AHB and AXI</div>
<div class="t" style="left:15px;top:74.1px;color:#333">Description:</div><div class="t" style="left:87px;top:74.1px;color:#333">This bridge acts as a translat</div>
<div class="t" style="left:87px;top:86.5px;color:#333">synchronization between dev</div>
<div class="t" style="left:87px;top:99.5px;color:#333">AXI4 based interfaces.</div>
</div>
<!-- IP INDEX -->
<div class="a" style="left:1862px;top:48px;width:186px;height:1036px;background:#ededed"></div>
<div class="t" style="left:1866px;top:53px">IP Index</div>
<div class="xbtn" style="left:2036px;top:54px"></div>
<div class="a" style="left:1863px;top:68px;width:185px;height:340px;background:#fff;border:1px solid #c9c9c9;overflow:hidden">
<div class="a" style="left:0;top:0;width:185px;height:14px;background:#efefef;border-bottom:1px solid #d8d8d8"></div>
<div class="t" style="left:2px;top:1px;color:#222">Available</div>
<div class="a" style="left:0;top:14.5px;width:185px;height:11px;background:#3a8fd0"></div>
<div class="t" style="left:19px;top:13.0px;color:#f4f9ff">ahb2axi_bridge_v1_0</div>
<div class="t" style="left:19px;top:24.5px;color:#2e2e2e">axi_async_fifo_v1_0</div>
<div class="t" style="left:19px;top:36.0px;color:#2e2e2e">axi_cdma_v1_0</div>
<div class="t" style="left:19px;top:47.6px;color:#2e2e2e">axi_cdma_v2_0</div>
<div class="t" style="left:19px;top:59.1px;color:#2e2e2e">axi_crossbar_v1_0</div>
<div class="t" style="left:19px;top:70.6px;color:#2e2e2e">axi_crossbar_v2_0</div>
<div class="t" style="left:19px;top:82.1px;color:#2e2e2e">axi_dma_v1_0</div>
<div class="t" style="left:19px;top:93.6px;color:#2e2e2e">axi_dpram_v1_0</div>
<div class="t" style="left:19px;top:105.2px;color:#2e2e2e">axi_fifo_v1_0</div>
<div class="t" style="left:19px;top:116.7px;color:#2e2e2e">axi_interconnect_v1_0</div>
<div class="t" style="left:19px;top:128.2px;color:#2e2e2e">axi_ram_v1_0</div>
<div class="t" style="left:19px;top:139.7px;color:#2e2e2e">axi_register_v1_0</div>
<div class="t" style="left:19px;top:151.2px;color:#2e2e2e">axi2axilite_bridge_v1_0</div>
<div class="t" style="left:19px;top:162.8px;color:#2e2e2e">axil_crossbar_v1_0</div>
<div class="t" style="left:19px;top:174.3px;color:#2e2e2e">axil_crossbar_v2_0</div>
<div class="t" style="left:19px;top:185.8px;color:#2e2e2e">axil_eio_v1_0</div>
<div class="t" style="left:19px;top:197.3px;color:#2e2e2e">axil_ethernet_v1_0</div>
<div class="t" style="left:19px;top:208.8px;color:#2e2e2e">axil_gpio_v1_0</div>
<div class="t" style="left:19px;top:220.4px;color:#2e2e2e">axil_interconnect_v1_0</div>
<div class="t" style="left:19px;top:231.9px;color:#2e2e2e">axil_ocla_v1_0</div>
<div class="t" style="left:19px;top:243.4px;color:#2e2e2e">axil_quadspi_v1_0</div>
<div class="t" style="left:19px;top:254.9px;color:#2e2e2e">axil_uart16550_v1_0</div>
<div class="t" style="left:19px;top:266.4px;color:#2e2e2e">axis_adapter_v1_0</div>
<div class="t" style="left:19px;top:278.0px;color:#2e2e2e">axis_async_fifo_v1_0</div>
<div class="t" style="left:19px;top:289.5px;color:#2e2e2e">axis_broadcast_v1_0</div>
<div class="t" style="left:19px;top:301.0px;color:#2e2e2e">axis_fifo_v1_0</div>
<div class="t" style="left:19px;top:312.5px;color:#2e2e2e">axis_interconnect_v1_0</div>
<div class="t" style="left:19px;top:324.0px;color:#2e2e2e">axis_pipeline_register_v1_0</div>
<div class="t" style="left:19px;top:335.6px;color:#2e2e2e">axis_ram_switch_v1_0</div>
</div>
<div class="a" style="left:2025px;top:668px;width:23px;height:416px;background:#efeeed"></div>
<div class="xbtn" style="left:2037px;top:676px"></div>
<div class="a" style="left:2036px;top:688px;width:11px;height:366px;background:#e4e4e4;border-left:1px solid #d6d6d6"></div>
<div class="a" style="left:2037px;top:700px;width:10px;height:321px;background:#dadada"></div>
<div class="a" style="left:2037px;top:1043px;width:10px;height:11px;background:#f4f4f4"></div>
<div class="a" style="left:2039px;top:692px;border-left:3.5px solid transparent;border-right:3.5px solid transparent;border-bottom:4px solid #444"></div>
<div class="a" style="left:2039px;top:1047px;border-left:3.5px solid transparent;border-right:3.5px solid transparent;border-top:4px solid #444"></div>
<div class="a" style="left:2028px;top:1057px;border-top:3px solid transparent;border-bottom:3px solid transparent;border-left:3.5px solid #444"></div>
<!-- CONSOLE -->
<div class="a" style="left:0;top:648px;width:1206px;height:436px;background:#efeeed"></div>
<div class="a" style="left:0;top:671px;width:1206px;height:1px;background:#d2d2d2"></div>
<div class="a" style="left:1px;top:653px;width:59px;height:19px;background:#f4f3f3;border:1px solid #d3d3d3;border-bottom:none"></div>
<div class="a" style="left:60px;top:654px;width:67px;height:17px;background:#e3e3e3;border:1px solid #d0d0d0;border-bottom:none"></div>
<div class="a" style="left:128px;top:654px;width:57px;height:17px;background:#e3e3e3;border:1px solid #d0d0d0;border-bottom:none"></div>
<div class="a" style="left:186px;top:654px;width:97px;height:17px;background:#e3e3e3;border:1px solid #d0d0d0;border-bottom:none"></div>
<div class="t" style="left:10px;top:657px">Console</div>
<div class="t" style="left:69px;top:658px">Messages</div>
<div class="t" style="left:137px;top:658px">Reports</div>
<div class="t" style="left:195px;top:658px">Compute usage</div>
<div class="t" style="left:4px;top:675px">Console</div>
<div class="a" style="left:2px;top:690px;width:16px;height:16px;background:#eaeaea;border:1px solid #d6d6d6;border-radius:2px"></div>
<svg class="a" style="left:3px;top:691px" width="14" height="14"><path d="M7 2l5 5-4 4H5L2 8z" fill="none" stroke="#333" stroke-width="1.2"/><path d="M4.5 5.5l4 4" stroke="#333" stroke-width="1"/></svg>
<div class="a" style="left:2px;top:709px;width:16px;height:18px;background:#eaeaea;border:1px solid #d6d6d6;border-radius:2px"></div>
<svg class="a" style="left:3px;top:711px" width="14" height="14"><circle cx="6" cy="6" r="4.2" fill="none" stroke="#333" stroke-width="1.2"/><path d="M9 9l3.5 3.5" stroke="#333" stroke-width="1.3"/></svg>
<div class="a" style="left:20px;top:689px;width:1186px;height:378px;background:#fff;border:1px solid #cfcfcf;overflow:hidden">
<div class="t mono" style="left:4px;top:-0.5px;font-size:13.15px;line-height:16px;color:#5a4fd0">Warning 417: Netlist connects net $false to both driven and undriven</div>
<div class="t mono" style="left:4px;top:16.8px;font-size:13.15px;line-height:16px;color:#5a4fd0">Warning 418: Netlist connects net $false to both driven and undriven</div>
<div class="t mono" style="left:4px;top:34.2px;font-size:13.15px;line-height:16px;color:#5a4fd0">Warning 419: Netlist connects net $false to both driven and undriven</div>
<div class="t mono" style="left:4px;top:51.5px;font-size:13.15px;line-height:16px;color:#5a4fd0">Warning 420: Netlist connects net $false to both driven and undriven</div>
<div class="t mono" style="left:4px;top:68.8px;font-size:13.15px;line-height:16px;color:#5a4fd0">Warning 421: Netlist connects net $false to both driven and undriven</div>
<div class="t mono" style="left:4px;top:86.1px;font-size:13.15px;line-height:16px;color:#5a4fd0">Warning 422: Netlist connects net $false to both driven and undriven</div>
<div class="t mono" style="left:4px;top:103.5px;font-size:13.15px;line-height:16px;color:#5a4fd0">Finished loading packed FPGA netlist file (took 0.2 seconds)</div>
<div class="t mono" style="left:4px;top:120.8px;font-size:13.15px;line-height:16px;color:#5a4fd0"># Load packing took 0.21 seconds (max_rss 274.0 MiB)</div>
<div class="t mono" style="left:4px;top:138.1px;font-size:13.15px;line-height:16px;color:#5a4fd0">Warning 423: Netlist contains 257 global net to non-global</div>
<div class="t mono" style="left:4px;top:155.5px;font-size:13.15px;line-height:16px;color:#5a4fd0">Cluster level netlist and block usage statistics</div>
<div class="t mono" style="left:4px;top:172.8px;font-size:13.15px;line-height:16px;color:#5a4fd0">Netlist num_nets: 1352</div>
<div class="t mono" style="left:4px;top:190.1px;font-size:13.15px;line-height:16px;color:#5a4fd0">Netlist num_blocks: 380</div>
<div class="t mono" style="left:4px;top:207.5px;font-size:13.15px;line-height:16px;color:#5a4fd0">Netlist EMPTY blocks: 0.</div>
<div class="t mono" style="left:4px;top:224.8px;font-size:13.15px;line-height:16px;color:#5a4fd0">Netlist io blocks: 265.</div>
<div class="t mono" style="left:4px;top:242.1px;font-size:13.15px;line-height:16px;color:#5a4fd0">Netlist clb blocks: 83.</div>
<div class="t mono" style="left:4px;top:259.5px;font-size:13.15px;line-height:16px;color:#5a4fd0">Netlist dsp blocks: 0.</div>
<div class="t mono" style="left:4px;top:276.8px;font-size:13.15px;line-height:16px;color:#5a4fd0">Netlist bram blocks: 32.</div>
<div class="t mono" style="left:4px;top:294.1px;font-size:13.15px;line-height:16px;color:#5a4fd0">Netlist inputs pins: 134</div>
<div class="t mono" style="left:4px;top:311.4px;font-size:13.15px;line-height:16px;color:#5a4fd0">Netlist output pins: 131</div>
<div class="a" style="left:0;top:364px;width:1186px;height:13px;background:#e4e4e4;border-top:1px solid #d4d4d4"></div>
<div class="a" style="left:12px;top:365px;width:81px;height:12px;background:#f2f2f2;border-right:1px solid #d0d0d0"></div>
<div class="a" style="left:3px;top:367px;border-top:3.5px solid transparent;border-bottom:3.5px solid transparent;border-right:4px solid #444"></div>
</div>
<!-- GTKWAVE -->
<div class="a" style="left:1193px;top:668px;width:832px;height:416px;background:#f6f5f4;border-radius:8px 8px 0 0;overflow:hidden;box-shadow:0 0 4px rgba(0,0,0,0.3)">
<div class="a" style="left:0;top:0;width:832px;height:34px;background:#383734"></div>
<div class="a" style="left:5px;top:4px;width:28px;height:26px;border-left:1px solid #2a2a28;border-right:1px solid #4a4946"></div>
<div class="a" style="left:12px;top:14px;border-left:5px solid transparent;border-right:5px solid transparent;border-bottom:5px solid #bdbdbd"></div>
<div class="a" style="left:41px;top:16px;border-left:5px solid transparent;border-right:5px solid transparent;border-top:5px solid #bdbdbd"></div>
<div class="a" style="left:34px;top:4px;width:1px;height:26px;background:#2a2a28"></div>
<div class="t" style="left:179px;top:7px;font-size:12px;font-weight:bold;color:#dfdbd2">GTKWave - /home/user/counter.vcd</div>
</div>
<svg class="a" style="left:1201px;top:710px" width="17" height="17"><path d="M2 4h12M2 8h12M2 12h12" stroke="#6a6a6a" stroke-width="1.4"/></svg>
<svg class="a" style="left:1226px;top:710px" width="17" height="17"><path d="M5 1l5 9M11 1L6 10" stroke="#6a6a6a" stroke-width="1.1" fill="none"/><circle cx="4.5" cy="13" r="2.2" fill="none" stroke="#6a6a6a" stroke-width="1.1"/><circle cx="11.5" cy="13" r="2.2" fill="none" stroke="#6a6a6a" stroke-width="1.1"/></svg>
<svg class="a" style="left:1252px;top:710px" width="17" height="17"><rect x="4" y="3" width="10" height="12" rx="1" fill="none" stroke="#6a6a6a" stroke-width="1.1"/><path d="M2 13V1h9M6 7h6M6 9.5h6M6 12h4" stroke="#6a6a6a" stroke-width="1" fill="none"/></svg>
<svg class="a" style="left:1277px;top:710px" width="17" height="17"><rect x="2" y="3" width="11" height="13" rx="1" fill="none" stroke="#6a6a6a" stroke-width="1.1"/><rect x="5" y="1.5" width="5" height="3" fill="none" stroke="#6a6a6a" stroke-width="1"/><path d="M5 8h7M5 10.5h7M5 13h5" stroke="#6a6a6a" stroke-width="1"/></svg>
<svg class="a" style="left:1303px;top:710px" width="17" height="17"><path d="M2 5V2h3M11 2h3v3M14 11v3h-3M5 14H2v-3" stroke="#6a6a6a" stroke-width="1.3" fill="none"/></svg>
<svg class="a" style="left:1329px;top:710px" width="17" height="17"><circle cx="7" cy="7" r="5.5" fill="none" stroke="#6a6a6a" stroke-width="1.2"/><path d="M11 11l4 4M4.5 7h5M7 4.5v5" stroke="#6a6a6a" stroke-width="1.2"/></svg>
<svg class="a" style="left:1354px;top:710px" width="17" height="17"><circle cx="7" cy="7" r="5.5" fill="none" stroke="#6a6a6a" stroke-width="1.2"/><path d="M11 11l4 4M4.5 7h5" stroke="#6a6a6a" stroke-width="1.2"/></svg>
<svg class="a" style="left:1379px;top:710px" width="17" height="17"><path d="M3 10a6 6 0 0 1 12 0" fill="none" stroke="#6a6a6a" stroke-width="1.3"/><path d="M1 8l2 3 3-2" fill="none" stroke="#6a6a6a" stroke-width="1.2"/></svg>
<svg class="a" style="left:1403px;top:710px" width="17" height="17"><circle cx="3" cy="8" r="0.9" fill="#6a6a6a"/><path d="M12 2L7 8l5 6" fill="none" stroke="#6a6a6a" stroke-width="1.1"/></svg>
<svg class="a" style="left:1434px;top:710px" width="17" height="17"><circle cx="13" cy="8" r="0.9" fill="#6a6a6a"/><path d="M4 2l5 6-5 6" fill="none" stroke="#6a6a6a" stroke-width="1.1"/></svg>
<svg class="a" style="left:1457px;top:710px" width="17" height="17"><path d="M11 2L6 8l5 6" fill="none" stroke="#6a6a6a" stroke-width="1.1"/></svg>
<svg class="a" style="left:1482px;top:710px" width="17" height="17"><path d="M5 2l5 6-5 6" fill="none" stroke="#6a6a6a" stroke-width="1.1"/></svg>
<div class="t" style="left:1505px;top:712px;color:#9a9a9a;font-size:12px">From:</div>
<div class="a" style="left:1537px;top:707px;width:136px;height:23px;background:#fff;border:1px solid #dcdcdc;border-radius:4px"></div>
<div class="t" style="left:1543px;top:712px;color:#333;font-size:11.5px">0 sec</div>
<div class="t" style="left:1677px;top:712px;color:#9a9a9a;font-size:12px">To:</div>
<div class="a" style="left:1695px;top:707px;width:136px;height:23px;background:#fff;border:1px solid #dcdcdc;border-radius:4px"></div>
<div class="t" style="left:1701px;top:712px;color:#333;font-size:11.5px">1 us</div>
<svg class="a" style="left:1837px;top:709px" width="19" height="19"><path d="M15 9.5a6 6 0 1 1-2-4.5" fill="none" stroke="#8a8a8a" stroke-width="1.2"/><path d="M13 2v3.5h-3.5" fill="none" stroke="#8a8a8a" stroke-width="1.1"/></svg>
<div class="a" style="left:1198px;top:739px;border-left:3.5px solid transparent;border-right:3.5px solid transparent;border-top:5px solid #888"></div>
<div class="t" style="left:1207px;top:737px;color:#9a9a9a;font-size:11.5px">SST</div>
<div class="a" style="left:1197px;top:752px;width:224px;height:89px;background:#fff;border:1px solid #e2e2e2"></div>
<div class="a" style="left:1197px;top:752px;width:224px;height:19px;background:#e35a22"></div>
<svg class="a" style="left:1212px;top:754px" width="16" height="14"><path d="M8 2v4M3 9V6.5h10V9" stroke="#f3d0b0" stroke-width="1" fill="none"/><circle cx="8" cy="2.5" r="1.3" fill="#f7e3c9"/><rect x="1.5" y="9.5" width="3" height="2.5" fill="#f0e0a0"/><rect x="6.5" y="9.5" width="3" height="2.5" fill="#a0d080"/><rect x="11.5" y="9.5" width="3" height="2.5" fill="#a0d080"/></svg>
<div class="t" style="left:1229px;top:756px;color:#fff;font-size:12px">dut</div>
<div class="a" style="left:1195px;top:843px;width:228px;height:1px;background:#e4e4e4"></div>
<div class="a" style="left:1197px;top:846px;width:224px;height:173px;background:#fff;border:1px solid #e2e2e2"></div>
<div class="t" style="left:1201px;top:852px;color:#9a9a9a;font-size:11.5px;font-weight:bold">Dir</div>
<div class="t" style="left:1229px;top:852px;color:#9a9a9a;font-size:11.5px;font-weight:bold">Type</div>
<div class="t" style="left:1329px;top:852px;color:#9a9a9a;font-size:11.5px;font-weight:bold">Signals</div>
<div class="t" style="left:1201px;top:871.0px;color:#333;font-size:12.3px">I</div>
<div class="t" style="left:1228px;top:871.0px;color:#333;font-size:12.3px">std_logic</div>
<div class="t" style="left:1326px;top:871.0px;color:#333;font-size:12.3px">clock0</div>
<div class="t" style="left:1201px;top:890.0px;color:#333;font-size:12.3px">O</div>
<div class="t" style="left:1228px;top:890.0px;color:#333;font-size:12.3px">std_logic_vector</div>
<div class="t" style="left:1326px;top:890.0px;color:#333;font-size:12.3px">counter[3:0]</div>
<div class="t" style="left:1201px;top:909.0px;color:#333;font-size:12.3px"></div>
<div class="t" style="left:1228px;top:909.0px;color:#333;font-size:12.3px">std_logic_vector</div>
<div class="t" style="left:1326px;top:909.0px;color:#333;font-size:12.3px">counter_up[3:0]</div>
<div class="t" style="left:1201px;top:928.0px;color:#333;font-size:12.3px">I</div>
<div class="t" style="left:1228px;top:928.0px;color:#333;font-size:12.3px">std_logic</div>
<div class="t" style="left:1326px;top:928.0px;color:#333;font-size:12.3px">reset</div>
<div class="a" style="left:1197px;top:1024px;width:224px;height:27px;background:#fff;border:1px solid #dedede;border-radius:4px"></div>
<svg class="a" style="left:1203px;top:1030px" width="14" height="14"><circle cx="6" cy="6" r="4.5" fill="none" stroke="#9a9a9a" stroke-width="1.1"/><path d="M9.3 9.3l3 3" stroke="#9a9a9a" stroke-width="1.2"/></svg>
<div class="a" style="left:1197px;top:1057px;width:71px;height:25px;background:#f8f7f6;border:1px solid #dcdcdc;border-radius:4px"></div>
<div class="t" style="left:1197px;width:71px;text-align:center;top:1063px;color:#a0a0a0;font-size:12px">Append</div>
<div class="a" style="left:1274px;top:1057px;width:65px;height:25px;background:#f8f7f6;border:1px solid #dcdcdc;border-radius:4px"></div>
<div class="t" style="left:1274px;width:65px;text-align:center;top:1063px;color:#a0a0a0;font-size:12px">Insert</div>
<div class="a" style="left:1345px;top:1057px;width:76px;height:25px;background:#f8f7f6;border:1px solid #dcdcdc;border-radius:4px"></div>
<div class="t" style="left:1345px;width:76px;text-align:center;top:1063px;color:#a0a0a0;font-size:12px">Replace</div>
<div class="a" style="left:1423px;top:738px;width:1px;height:346px;background:#e2e2e2"></div>
<div class="a" style="left:1547px;top:738px;width:1px;height:346px;background:#e2e2e2"></div>
<div class="t" style="left:1427px;top:738px;color:#9a9a9a;font-size:11.5px">Signals</div>
<div class="a" style="left:1465px;top:743px;width:82px;height:1px;background:#e4e4e4"></div>
<div class="a" style="left:1427px;top:750px;width:118px;height:334px;background:#fff;border-left:1px solid #e6e6e6"></div>
<div class="a" style="left:1427px;top:751px;width:118px;height:15px;background:#c8c8c8"></div>
<div class="t" style="left:1430px;top:753.5px;font-family:Liberation Mono;font-size:10.9px;color:#222">Time</div>
<div class="t mono" style="left:1427px;width:101px;text-align:right;top:769.0px;font-size:10.9px;color:#222">clock0</div>
<div class="t mono" style="left:1427px;width:101px;text-align:right;top:784.6px;font-size:10.9px;color:#222">counter[3:0]</div>
<div class="t mono" style="left:1427px;width:101px;text-align:right;top:800.2px;font-size:10.9px;color:#222">counter_up[3:0]</div>
<div class="t mono" style="left:1427px;width:101px;text-align:right;top:815.8px;font-size:10.9px;color:#222">reset</div>
<div class="t" style="left:1550px;top:738px;color:#9a9a9a;font-size:11.5px">Waves</div>
<div class="a" style="left:1593px;top:743px;width:427px;height:1px;background:#e4e4e4"></div>
<div class="a" style="left:1551px;top:750px;width:463px;height:322px;background:#000"></div>
<div class="a" style="left:1551px;top:750px;width:2px;height:322px;background:#c8c8ff"></div>
<div class="a" style="left:1716px;top:751px;width:1px;height:321px;background:#23234a"></div>
<div class="a" style="left:1882px;top:751px;width:1px;height:321px;background:#23234a"></div>
<div class="t" style="left:1552px;top:750px;color:#ccc;font-size:9px;font-family:Liberation Mono">0</div>
<div class="t" style="left:1708px;top:750px;color:#ccc;font-size:9px;font-family:Liberation Mono">1 fs</div>
<div class="t" style="left:1874px;top:750px;color:#ccc;font-size:9px;font-family:Liberation Mono">2 fs</div>
<svg class="a" style="left:1552px;top:761px" width="462" height="4"><rect x="0.0" y="0" width="0.9" height="3" fill="#34345a"/><rect x="8.3" y="0" width="0.9" height="3" fill="#34345a"/><rect x="16.6" y="0" width="0.9" height="3" fill="#34345a"/><rect x="24.9" y="0" width="0.9" height="3" fill="#34345a"/><rect x="33.2" y="0" width="0.9" height="3" fill="#34345a"/><rect x="41.5" y="0" width="0.9" height="3" fill="#34345a"/><rect x="49.8" y="0" width="0.9" height="3" fill="#34345a"/><rect x="58.1" y="0" width="0.9" height="3" fill="#34345a"/><rect x="66.4" y="0" width="0.9" height="3" fill="#34345a"/><rect x="74.7" y="0" width="0.9" height="3" fill="#34345a"/><rect x="83.0" y="0" width="0.9" height="3" fill="#34345a"/><rect x="91.3" y="0" width="0.9" height="3" fill="#34345a"/><rect x="99.6" y="0" width="0.9" height="3" fill="#34345a"/><rect x="107.9" y="0" width="0.9" height="3" fill="#34345a"/><rect x="116.2" y="0" width="0.9" height="3" fill="#34345a"/><rect x="124.5" y="0" width="0.9" height="3" fill="#34345a"/><rect x="132.8" y="0" width="0.9" height="3" fill="#34345a"/><rect x="141.1" y="0" width="0.9" height="3" fill="#34345a"/><rect x="149.4" y="0" width="0.9" height="3" fill="#34345a"/><rect x="157.7" y="0" width="0.9" height="3" fill="#34345a"/><rect x="166.0" y="0" width="0.9" height="3" fill="#34345a"/><rect x="174.3" y="0" width="0.9" height="3" fill="#34345a"/><rect x="182.6" y="0" width="0.9" height="3" fill="#34345a"/><rect x="190.9" y="0" width="0.9" height="3" fill="#34345a"/><rect x="199.2" y="0" width="0.9" height="3" fill="#34345a"/><rect x="207.5" y="0" width="0.9" height="3" fill="#34345a"/><rect x="215.8" y="0" width="0.9" height="3" fill="#34345a"/><rect x="224.1" y="0" width="0.9" height="3" fill="#34345a"/><rect x="232.4" y="0" width="0.9" height="3" fill="#34345a"/><rect x="240.7" y="0" width="0.9" height="3" fill="#34345a"/><rect x="249.0" y="0" width="0.9" height="3" fill="#34345a"/><rect x="257.3" y="0" width="0.9" height="3" fill="#34345a"/><rect x="265.6" y="0" width="0.9" height="3" fill="#34345a"/><rect x="273.9" y="0" width="0.9" height="3" fill="#34345a"/><rect x="282.2" y="0" width="0.9" height="3" fill="#34345a"/><rect x="290.5" y="0" width="0.9" height="3" fill="#34345a"/><rect x="298.8" y="0" width="0.9" height="3" fill="#34345a"/><rect x="307.1" y="0" width="0.9" height="3" fill="#34345a"/><rect x="315.4" y="0" width="0.9" height="3" fill="#34345a"/><rect x="323.7" y="0" width="0.9" height="3" fill="#34345a"/><rect x="332.0" y="0" width="0.9" height="3" fill="#34345a"/><rect x="340.3" y="0" width="0.9" height="3" fill="#34345a"/><rect x="348.6" y="0" width="0.9" height="3" fill="#34345a"/><rect x="356.9" y="0" width="0.9" height="3" fill="#34345a"/><rect x="365.2" y="0" width="0.9" height="3" fill="#34345a"/><rect x="373.5" y="0" width="0.9" height="3" fill="#34345a"/><rect x="381.8" y="0" width="0.9" height="3" fill="#34345a"/><rect x="390.1" y="0" width="0.9" height="3" fill="#34345a"/><rect x="398.4" y="0" width="0.9" height="3" fill="#34345a"/><rect x="406.7" y="0" width="0.9" height="3" fill="#34345a"/><rect x="415.0" y="0" width="0.9" height="3" fill="#34345a"/><rect x="423.3" y="0" width="0.9" height="3" fill="#34345a"/><rect x="431.6" y="0" width="0.9" height="3" fill="#34345a"/><rect x="439.9" y="0" width="0.9" height="3" fill="#34345a"/><rect x="448.2" y="0" width="0.9" height="3" fill="#34345a"/><rect x="456.5" y="0" width="0.9" height="3" fill="#34345a"/></svg>
<div class="a" style="left:1553px;top:778px;width:461px;height:1.2px;background:#2a6a2a"></div>
<div class="a" style="left:1553px;top:780px;width:461px;height:1.2px;background:#24245e"></div>
<div class="a" style="left:1553px;top:783px;width:461px;height:1.2px;background:#8e1a1a"></div>
<div class="a" style="left:1553px;top:794px;width:461px;height:1.2px;background:#8e1a1a"></div>
<div class="a" style="left:1553px;top:796px;width:461px;height:1.2px;background:#24245e"></div>
<div class="a" style="left:1553px;top:799.5px;width:461px;height:1.2px;background:#8e1a1a"></div>
<div class="a" style="left:1553px;top:809.5px;width:461px;height:1.2px;background:#8e1a1a"></div>
<div class="a" style="left:1553px;top:811.5px;width:461px;height:1.2px;background:#24245e"></div>
<div class="a" style="left:1553px;top:814.5px;width:461px;height:1.5px;background:#2a8a2a"></div>
<div class="a" style="left:1553px;top:827px;width:461px;height:1.2px;background:#22224a"></div>
<div class="t" style="left:1554px;top:786px;color:#ddd;font-size:8.5px;font-family:Liberation Mono">u</div>
<div class="t" style="left:1554px;top:801px;color:#ddd;font-size:8.5px;font-family:Liberation Mono">u</div>
<div class="a" style="left:1552px;top:766px;width:1px;height:12px;background:#30d030"></div>
<div class="a" style="left:1552px;top:815px;width:1px;height:12px;background:#30d030"></div>
<div class="a" style="left:2017px;top:750px;width:8px;height:322px;background:#e8e8e8"></div>
<div class="a" style="left:1551px;top:1073px;width:463px;height:10px;background:#f0f0f0;border-top:1px solid #e0e0e0"></div>
<div class="a" style="left:1555px;top:1075px;width:35px;height:4px;background:#d6d6d6;border-radius:2px"></div>
<!-- RAPTOR -->
<div class="a" style="left:1440px;top:398px;width:597px;height:303px;background:#f6f5f4;border:1px solid #d0d0d0;border-radius:8px 8px 0 0;box-shadow:0 1px 6px rgba(0,0,0,0.25);overflow:hidden">
<div class="a" style="left:0px;top:0px;width:597px;height:30px;background:#f0efee;border-bottom:1px solid #e0dfde"></div>
<div class="t" style="left:106px;top:9.5px;font-size:11.95px;font-weight:bold;color:#5a5a5a">Raptor Programmer and Debugger (on ussw02.rapidsiliconus.local)</div>
<div class="a" style="left:522px;top:16px;width:9px;height:1px;background:#777"></div>
<div class="a" style="left:550px;top:11.5px;width:8px;height:7px;border:1px solid #666"></div>
<svg class="a" style="left:578px;top:11px" width="10" height="10"><path d="M1.5 1.5l7 7M8.5 1.5l-7 7" stroke="#555" stroke-width="1"/></svg>
<div class="a" style="left:0px;top:30px;width:597px;height:16px;background:#efefef"></div>
<div class="t" style="left:8px;top:32px;color:#333">File</div>
<div class="t" style="left:37px;top:32px;color:#333">Settings</div>
<div class="a" style="left:0px;top:46px;width:597px;height:33px;background:#f0f0f0;border-top:1px solid #e6e6e6;border-bottom:1px solid #dcdcdc"></div>
<svg class="a" style="left:5px;top:54px" width="4" height="18"><path d="M1 1v16M3 1v16" stroke="#c8c8c8" stroke-dasharray="1 1.5"/></svg>
<div class="t" style="left:11px;top:57.5px;color:#333">Hardware:</div>
<div class="a" style="left:67px;top:53px;width:98px;height:20px;background:#fafafa;border:1px solid #c8c8c8;border-radius:2px"></div>
<div class="a" style="left:150px;top:61px;border-left:3.5px solid transparent;border-right:3.5px solid transparent;border-top:4px solid #333"></div>
<div class="t" style="left:170px;top:57.5px;color:#333">Interface:</div>
<div class="a" style="left:222px;top:53px;width:98px;height:20px;background:#fafafa;border:1px solid #c8c8c8;border-radius:2px"></div>
<div class="t" style="left:225px;top:56.5px;color:#333">JTAG</div>
<div class="a" style="left:306px;top:61px;border-left:3.5px solid transparent;border-right:3.5px solid transparent;border-top:4px solid #333"></div>
<svg class="a" style="left:326px;top:53px" width="20" height="20"><circle cx="8.5" cy="8.5" r="7" fill="none" stroke="#333" stroke-width="1.4"/><rect x="6" y="4.5" width="5" height="8" rx="2.5" fill="none" stroke="#333" stroke-width="1.2"/><path d="M13.5 13.5l4.5 4.5" stroke="#333" stroke-width="1.6"/></svg>
<div class="t" style="left:346px;top:57.5px;color:#333">Detect</div>
<svg class="a" style="left:399px;top:54px" width="16" height="17"><path d="M1.5 1.5l13 7-13 7z" fill="#20b030" stroke="#106018" stroke-width="1"/></svg>
<div class="t" style="left:415px;top:57.5px;color:#333">Start</div>
<div class="a" style="left:463px;top:53px;width:129px;height:20px;background:#fff;border:1px solid #c8c8c8;border-radius:2px"></div>
<div class="t" style="left:4px;top:85px;color:#333">Device Tree: 0 device(s) found</div>
<div class="a" style="left:8px;top:102px;width:581px;height:75px;background:#fff;border:1px solid #cfcfcf"></div>
<div class="a" style="left:9px;top:103px;width:579px;height:15px;background:#f2f2f2;border-bottom:1px solid #d8d8d8"></div>
<div class="a" style="left:133px;top:103px;width:1px;height:15px;background:#d8d8d8"></div>
<div class="a" style="left:421px;top:103px;width:1px;height:15px;background:#d8d8d8"></div>
<div class="t" style="left:11px;top:105px;color:#333">Device</div>
<div class="a" style="left:123px;top:108px;border-left:3px solid transparent;border-right:3px solid transparent;border-bottom:3.5px solid #444"></div>
<div class="t" style="left:135px;top:105px;color:#333">File</div>
<div class="t" style="left:423px;top:105px;color:#333">Operation</div>
<div class="a" style="left:9px;top:165px;width:579px;height:11px;background:#f6f6f6;border-top:1px solid #e0e0e0"></div>
<div class="a" style="left:453px;top:166px;width:123px;height:10px;background:#dcdcdc"></div>
<div class="a" style="left:13px;top:167px;border-top:3px solid transparent;border-bottom:3px solid transparent;border-right:3.5px solid #444"></div>
<div class="a" style="left:580px;top:167px;border-top:3px solid transparent;border-bottom:3px solid transparent;border-left:3.5px solid #444"></div>
<div class="t" style="left:4px;top:185.5px;color:#333">Console</div>
<div class="a" style="left:4px;top:199px;width:587px;height:80px;background:#efefef;border:1px solid #e2e2e2"></div>
<div class="a" style="left:9px;top:202px;width:18px;height:19px;background:#f1f1f1;border:1px solid #d8d8d8;border-radius:2px"></div>
<svg class="a" style="left:11px;top:204px" width="14" height="14"><path d="M7 2l5 5-4 4H5L2 8z" fill="none" stroke="#333" stroke-width="1.2"/><path d="M4.5 5.5l4 4" stroke="#333" stroke-width="1"/></svg>
<div class="a" style="left:9px;top:223px;width:18px;height:19px;background:#f1f1f1;border:1px solid #d8d8d8;border-radius:2px"></div>
<svg class="a" style="left:11px;top:225px" width="14" height="14"><circle cx="6" cy="6" r="4.2" fill="none" stroke="#333" stroke-width="1.2"/><path d="M9 9l3.5 3.5" stroke="#333" stroke-width="1.3"/></svg>
<div class="a" style="left:30px;top:204px;width:558px;height:72px;background:#fff;border:1px solid #d6d6d6"></div>
<div class="t" style="left:35px;top:211px;color:#333;font-size:10px">#</div>
</div>
<!-- VPR -->
<div class="a" style="left:410px;top:559px;width:718px;height:525px;background:#f6f5f4;border:1px solid #cfcfcf;border-bottom:none;border-radius:8px 8px 0 0;box-shadow:0 1px 6px rgba(0,0,0,0.25);overflow:hidden">
<div class="a" style="left:0;top:0;width:718px;height:31px;background:#ebebeb;border-bottom:1px solid #d8d8d8"></div>
<div class="t" style="left:0;width:716px;text-align:center;top:10.5px;font-size:11.95px;font-weight:bold;color:#3a3a3a">VPR: Versatile Place and Route for FPGAs (on ussw02.rapidsiliconus.local)</div>
<div class="a" style="left:638px;top:7.5px;width:18px;height:18px;border-radius:9px;background:#e2e1e0"></div>
<div class="a" style="left:666px;top:7.5px;width:18px;height:18px;border-radius:9px;background:#e2e1e0"></div>
<div class="a" style="left:694px;top:7.5px;width:18px;height:18px;border-radius:9px;background:#e2e1e0"></div>
<div class="a" style="left:643px;top:17px;width:8px;height:1px;background:#555"></div>
<div class="a" style="left:671px;top:13px;width:8px;height:8px;border:1px solid #555"></div>
<svg class="a" style="left:698px;top:12px" width="10" height="10"><path d="M1.5 1.5l7 7M8.5 1.5l-7 7" stroke="#444" stroke-width="1.1"/></svg>
<div class="a" style="left:1px;top:32px;width:142px;height:24px;background:#fbfbfb;border:1px solid #d4d4d4;border-radius:3px"></div>
<div class="t" style="left:8px;top:37.5px;color:#3b3b3b;font-size:12.2px">Block ID</div>
<div class="a" style="left:128px;top:42px;border-left:4px solid transparent;border-right:4px solid transparent;border-top:4.5px solid #333"></div>
<div class="a" style="left:145px;top:32px;width:285px;height:24px;background:#fbfbfb;border:1px solid #d4d4d4;border-radius:3px"></div>
<svg class="a" style="left:151px;top:37px" width="14" height="14"><circle cx="6" cy="6" r="4" fill="none" stroke="#2a4a8a" stroke-width="2"/><path d="M9 9l3.5 3.5" stroke="#2a4a8a" stroke-width="2.2"/></svg>
<div class="t" style="left:170px;top:37.5px;color:#8a8a8a;font-size:12.2px">Search...</div>
<div class="a" style="left:432px;top:32px;width:141px;height:24px;background:#fbfbfb;border:1px solid #d4d4d4;border-radius:3px"></div>
<div class="t" style="left:432px;width:141px;text-align:center;top:37.7px;color:#3b3b3b;font-size:12.2px">Search</div>
<div class="a" style="left:641px;top:32px;width:75px;height:24px;background:#fbfbfb;border:1px solid #d4d4d4;border-radius:3px"></div>
<div class="t" style="left:641px;width:75px;text-align:center;top:37.7px;color:#3b3b3b;font-size:12.2px">Zoom Fit</div>
<div class="a" style="left:1px;top:57px;width:142px;height:24px;background:#fbfbfb;border:1px solid #d4d4d4;border-radius:3px"></div>
<div class="t" style="left:1px;width:142px;text-align:center;top:62.7px;color:#3b3b3b;font-size:12.2px">Block Settings</div>
<div class="a" style="left:145px;top:57px;width:142px;height:24px;background:#fbfbfb;border:1px solid #d4d4d4;border-radius:3px"></div>
<div class="t" style="left:145px;width:142px;text-align:center;top:62.7px;color:#3b3b3b;font-size:12.2px">Net Settings</div>
<div class="a" style="left:288px;top:57px;width:142px;height:24px;background:#fbfbfb;border:1px solid #d4d4d4;border-radius:3px"></div>
<div class="t" style="left:288px;width:142px;text-align:center;top:62.7px;color:#3b3b3b;font-size:12.2px">Routing Options</div>
<div class="a" style="left:432px;top:57px;width:141px;height:24px;background:#fbfbfb;border:1px solid #d4d4d4;border-radius:3px"></div>
<div class="t" style="left:432px;width:141px;text-align:center;top:62.7px;color:#3b3b3b;font-size:12.2px">Misc.</div>
<div class="a" style="left:641px;top:57px;width:75px;height:24px;background:#fbfbfb;border:1px solid #d4d4d4;border-radius:3px"></div>
<div class="t" style="left:641px;width:75px;text-align:center;top:62.7px;color:#3b3b3b;font-size:12.2px">Window</div>
<div class="a" style="left:1px;top:82px;width:574px;height:414px;background:#fdfcfc"></div>
<div class="a" style="left:643px;top:496px;width:75px;height:35px;background:#fbfbfb;border:1px solid #d4d4d4;border-radius:3px"></div>
<div class="t" style="left:657px;top:504.5px;color:#3b3b3b;font-size:12.2px">Proceed</div>
<svg class="a" style="left:10.00px;top:107.15px" width="555.4" height="363.3"><defs><pattern id="cg" x="0" y="0" width="5.34" height="5.342" patternUnits="userSpaceOnUse"><rect x="0.4" y="0" width="3.4" height="1.45" fill="#4a4343"/><rect x="0.4" y="0" width="1.75" height="3.6" fill="#4a4343"/></pattern><pattern id="cge" x="5.34" y="0" width="10.68" height="5.342" patternUnits="userSpaceOnUse"><rect x="0.4" y="0" width="3.4" height="1.45" fill="#4a4343"/><rect x="0.4" y="0" width="1.75" height="3.6" fill="#4a4343"/><rect x="5.74" y="0" width="3.3" height="1.0" fill="#4a4444"/><rect x="5.74" y="1.3" width="3.3" height="1.0" fill="#6a5a5a"/><rect x="5.74" y="2.6" width="3.3" height="1.0" fill="#4a4444"/></pattern><pattern id="cd" x="0" y="0" width="5.34" height="5.342" patternUnits="userSpaceOnUse"><rect x="0.4" y="-0.4" width="3.4" height="1.2" fill="#4a4444"/><rect x="0.6" y="1.9" width="2.7" height="1.3" fill="#5a4a4a"/></pattern><pattern id="io" x="0" y="0" width="5.34" height="5.342" patternUnits="userSpaceOnUse"><path d="M0.2 0.6h2.7v2.5H0.2" fill="none" stroke="#4a4a4a" stroke-width="1.2"/></pattern><pattern id="tealc" x="0" y="0" width="5.34" height="5.342" patternUnits="userSpaceOnUse"><rect x="1.4" y="0" width="1.3" height="5.342" fill="#9ee8d4"/><rect x="0.7" y="0.3" width="1.1" height="2.6" fill="#4a6a62"/><rect x="2.2" y="2.6" width="1.1" height="2.6" fill="#4a6a62"/></pattern><pattern id="purc" x="0" y="0" width="5.34" height="5.342" patternUnits="userSpaceOnUse"><rect x="1.4" y="0" width="1.3" height="5.342" fill="#e4e2f4"/><rect x="0.7" y="0.3" width="1.1" height="2.6" fill="#6c6a7a"/><rect x="2.2" y="2.6" width="1.1" height="2.6" fill="#6c6a7a"/></pattern></defs><rect x="5.34" y="5.342" width="544.7" height="352.6" fill="url(#cg)"/><rect x="74.76" y="5.342" width="32.04" height="352.6" fill="#fdfcfc"/><rect x="74.76" y="5.342" width="32.04" height="352.6" fill="url(#cge)"/><rect x="112.14" y="5.342" width="32.04" height="352.6" fill="#fdfcfc"/><rect x="112.14" y="5.342" width="32.04" height="352.6" fill="url(#cge)"/><rect x="202.92" y="5.342" width="16.02" height="352.6" fill="#fdfcfc"/><rect x="202.92" y="5.342" width="16.02" height="352.6" fill="url(#cge)"/><rect x="224.28" y="5.342" width="16.02" height="352.6" fill="#fdfcfc"/><rect x="224.28" y="5.342" width="16.02" height="352.6" fill="url(#cge)"/><rect x="267.00" y="5.342" width="21.36" height="352.6" fill="#fdfcfc"/><rect x="267.00" y="5.342" width="21.36" height="352.6" fill="url(#cge)"/><rect x="315.06" y="5.342" width="16.02" height="352.6" fill="#fdfcfc"/><rect x="315.06" y="5.342" width="16.02" height="352.6" fill="url(#cge)"/><rect x="336.42" y="5.342" width="16.02" height="352.6" fill="#fdfcfc"/><rect x="336.42" y="5.342" width="16.02" height="352.6" fill="url(#cge)"/><rect x="411.18" y="5.342" width="32.04" height="352.6" fill="#fdfcfc"/><rect x="411.18" y="5.342" width="32.04" height="352.6" fill="url(#cge)"/><rect x="448.56" y="5.342" width="32.04" height="352.6" fill="#fdfcfc"/><rect x="448.56" y="5.342" width="32.04" height="352.6" fill="url(#cge)"/><rect x="5.34" y="5.34" width="544.7" height="5.342" fill="#fdfcfc"/><rect x="5.34" y="5.34" width="544.7" height="5.342" fill="url(#cd)"/><rect x="5.34" y="16.03" width="544.7" height="5.342" fill="#fdfcfc"/><rect x="5.34" y="16.03" width="544.7" height="5.342" fill="url(#cd)"/><rect x="5.34" y="26.71" width="544.7" height="5.342" fill="#fdfcfc"/><rect x="5.34" y="26.71" width="544.7" height="5.342" fill="url(#cd)"/><rect x="5.34" y="96.16" width="544.7" height="5.342" fill="#fdfcfc"/><rect x="5.34" y="96.16" width="544.7" height="5.342" fill="url(#cd)"/><rect x="5.34" y="106.84" width="544.7" height="5.342" fill="#fdfcfc"/><rect x="5.34" y="106.84" width="544.7" height="5.342" fill="url(#cd)"/><rect x="5.34" y="117.52" width="544.7" height="5.342" fill="#fdfcfc"/><rect x="5.34" y="117.52" width="544.7" height="5.342" fill="url(#cd)"/><rect x="5.34" y="128.21" width="544.7" height="5.342" fill="#fdfcfc"/><rect x="5.34" y="128.21" width="544.7" height="5.342" fill="url(#cd)"/><rect x="5.34" y="138.89" width="544.7" height="5.342" fill="#fdfcfc"/><rect x="5.34" y="138.89" width="544.7" height="5.342" fill="url(#cd)"/><rect x="5.34" y="219.02" width="544.7" height="5.342" fill="#fdfcfc"/><rect x="5.34" y="219.02" width="544.7" height="5.342" fill="url(#cd)"/><rect x="5.34" y="229.71" width="544.7" height="5.342" fill="#fdfcfc"/><rect x="5.34" y="229.71" width="544.7" height="5.342" fill="url(#cd)"/><rect x="5.34" y="240.39" width="544.7" height="5.342" fill="#fdfcfc"/><rect x="5.34" y="240.39" width="544.7" height="5.342" fill="url(#cd)"/><rect x="5.34" y="251.07" width="544.7" height="5.342" fill="#fdfcfc"/><rect x="5.34" y="251.07" width="544.7" height="5.342" fill="url(#cd)"/><rect x="5.34" y="261.76" width="544.7" height="5.342" fill="#fdfcfc"/><rect x="5.34" y="261.76" width="544.7" height="5.342" fill="url(#cd)"/><rect x="5.34" y="331.20" width="544.7" height="5.342" fill="#fdfcfc"/><rect x="5.34" y="331.20" width="544.7" height="5.342" fill="url(#cd)"/><rect x="5.34" y="341.89" width="544.7" height="5.342" fill="#fdfcfc"/><rect x="5.34" y="341.89" width="544.7" height="5.342" fill="url(#cd)"/><rect x="5.34" y="352.57" width="544.7" height="5.342" fill="#fdfcfc"/><rect x="5.34" y="352.57" width="544.7" height="5.342" fill="url(#cd)"/><rect x="32.04" y="5.342" width="5.34" height="352.6" fill="#fdfcfc"/><rect x="32.04" y="5.342" width="5.34" height="352.6" fill="url(#purc)"/><rect x="106.80" y="5.342" width="5.34" height="352.6" fill="#fdfcfc"/><rect x="106.80" y="5.342" width="5.34" height="352.6" fill="url(#purc)"/><rect x="218.94" y="5.342" width="5.34" height="352.6" fill="#fdfcfc"/><rect x="218.94" y="5.342" width="5.34" height="352.6" fill="url(#purc)"/><rect x="261.66" y="5.342" width="5.34" height="352.6" fill="#fdfcfc"/><rect x="261.66" y="5.342" width="5.34" height="352.6" fill="url(#purc)"/><rect x="288.36" y="5.342" width="5.34" height="352.6" fill="#fdfcfc"/><rect x="288.36" y="5.342" width="5.34" height="352.6" fill="url(#purc)"/><rect x="331.08" y="5.342" width="5.34" height="352.6" fill="#fdfcfc"/><rect x="331.08" y="5.342" width="5.34" height="352.6" fill="url(#purc)"/><rect x="443.22" y="5.342" width="5.34" height="352.6" fill="#fdfcfc"/><rect x="443.22" y="5.342" width="5.34" height="352.6" fill="url(#purc)"/><rect x="517.98" y="5.342" width="5.34" height="352.6" fill="#fdfcfc"/><rect x="517.98" y="5.342" width="5.34" height="352.6" fill="url(#purc)"/><rect x="69.42" y="5.342" width="5.34" height="352.6" fill="#fdfcfc"/><rect x="69.42" y="5.342" width="5.34" height="352.6" fill="url(#tealc)"/><rect x="144.18" y="5.342" width="5.34" height="352.6" fill="#fdfcfc"/><rect x="144.18" y="5.342" width="5.34" height="352.6" fill="url(#tealc)"/><rect x="197.58" y="5.342" width="5.34" height="352.6" fill="#fdfcfc"/><rect x="197.58" y="5.342" width="5.34" height="352.6" fill="url(#tealc)"/><rect x="240.30" y="5.342" width="5.34" height="352.6" fill="#fdfcfc"/><rect x="240.30" y="5.342" width="5.34" height="352.6" fill="url(#tealc)"/><rect x="309.72" y="5.342" width="5.34" height="352.6" fill="#fdfcfc"/><rect x="309.72" y="5.342" width="5.34" height="352.6" fill="url(#tealc)"/><rect x="352.44" y="5.342" width="5.34" height="352.6" fill="#fdfcfc"/><rect x="352.44" y="5.342" width="5.34" height="352.6" fill="url(#tealc)"/><rect x="405.84" y="5.342" width="5.34" height="352.6" fill="#fdfcfc"/><rect x="405.84" y="5.342" width="5.34" height="352.6" fill="url(#tealc)"/><rect x="480.60" y="5.342" width="5.34" height="352.6" fill="#fdfcfc"/><rect x="480.60" y="5.342" width="5.34" height="352.6" fill="url(#tealc)"/><rect x="0" y="0" width="555.4" height="5.342" fill="url(#io)"/><rect x="0" y="357.9" width="555.4" height="5.342" fill="url(#io)"/><rect x="0" y="5.342" width="5.34" height="352.6" fill="url(#io)"/><rect x="550.0" y="5.342" width="5.34" height="352.6" fill="url(#io)"/><rect x="0" y="5.3" width="5.34" height="5.342" fill="#fdfcfc"/><rect x="0.2" y="4.7" width="3.6" height="2.2" rx="0.6" fill="#111"/><rect x="0" y="16.0" width="5.34" height="5.342" fill="#fdfcfc"/><rect x="0.2" y="15.4" width="3.6" height="2.2" rx="0.6" fill="#111"/><rect x="0" y="26.7" width="5.34" height="5.342" fill="#fdfcfc"/><rect x="0.2" y="26.1" width="3.6" height="2.2" rx="0.6" fill="#111"/><rect x="0" y="96.2" width="5.34" height="5.342" fill="#fdfcfc"/><rect x="0.2" y="95.6" width="3.6" height="2.2" rx="0.6" fill="#111"/><rect x="0" y="106.8" width="5.34" height="5.342" fill="#fdfcfc"/><rect x="0.2" y="106.2" width="3.6" height="2.2" rx="0.6" fill="#111"/><rect x="0" y="117.5" width="5.34" height="5.342" fill="#fdfcfc"/><rect x="0.2" y="116.9" width="3.6" height="2.2" rx="0.6" fill="#111"/><rect x="0" y="128.2" width="5.34" height="5.342" fill="#fdfcfc"/><rect x="0.2" y="127.6" width="3.6" height="2.2" rx="0.6" fill="#111"/><rect x="0" y="138.9" width="5.34" height="5.342" fill="#fdfcfc"/><rect x="0.2" y="138.3" width="3.6" height="2.2" rx="0.6" fill="#111"/><rect x="0" y="219.0" width="5.34" height="5.342" fill="#fdfcfc"/><rect x="0.2" y="218.4" width="3.6" height="2.2" rx="0.6" fill="#111"/><rect x="0" y="229.7" width="5.34" height="5.342" fill="#fdfcfc"/><rect x="0.2" y="229.1" width="3.6" height="2.2" rx="0.6" fill="#111"/><rect x="0" y="240.4" width="5.34" height="5.342" fill="#fdfcfc"/><rect x="0.2" y="239.8" width="3.6" height="2.2" rx="0.6" fill="#111"/><rect x="0" y="251.1" width="5.34" height="5.342" fill="#fdfcfc"/><rect x="0.2" y="250.5" width="3.6" height="2.2" rx="0.6" fill="#111"/><rect x="0" y="261.8" width="5.34" height="5.342" fill="#fdfcfc"/><rect x="0.2" y="261.2" width="3.6" height="2.2" rx="0.6" fill="#111"/><rect x="0" y="331.2" width="5.34" height="5.342" fill="#fdfcfc"/><rect x="0.2" y="330.6" width="3.6" height="2.2" rx="0.6" fill="#111"/><rect x="0" y="341.9" width="5.34" height="5.342" fill="#fdfcfc"/><rect x="0.2" y="341.3" width="3.6" height="2.2" rx="0.6" fill="#111"/><rect x="0" y="352.6" width="5.34" height="5.342" fill="#fdfcfc"/><rect x="0.2" y="352.0" width="3.6" height="2.2" rx="0.6" fill="#111"/><rect x="550.0" y="5.3" width="5.34" height="5.342" fill="#fdfcfc"/><rect x="550.4" y="4.7" width="3.6" height="2.2" rx="0.6" fill="#111"/><rect x="550.0" y="16.0" width="5.34" height="5.342" fill="#fdfcfc"/><rect x="550.4" y="15.4" width="3.6" height="2.2" rx="0.6" fill="#111"/><rect x="550.0" y="26.7" width="5.34" height="5.342" fill="#fdfcfc"/><rect x="550.4" y="26.1" width="3.6" height="2.2" rx="0.6" fill="#111"/><rect x="550.0" y="96.2" width="5.34" height="5.342" fill="#fdfcfc"/><rect x="550.4" y="95.6" width="3.6" height="2.2" rx="0.6" fill="#111"/><rect x="550.0" y="106.8" width="5.34" height="5.342" fill="#fdfcfc"/><rect x="550.4" y="106.2" width="3.6" height="2.2" rx="0.6" fill="#111"/><rect x="550.0" y="117.5" width="5.34" height="5.342" fill="#fdfcfc"/><rect x="550.4" y="116.9" width="3.6" height="2.2" rx="0.6" fill="#111"/><rect x="550.0" y="128.2" width="5.34" height="5.342" fill="#fdfcfc"/><rect x="550.4" y="127.6" width="3.6" height="2.2" rx="0.6" fill="#111"/><rect x="550.0" y="138.9" width="5.34" height="5.342" fill="#fdfcfc"/><rect x="550.4" y="138.3" width="3.6" height="2.2" rx="0.6" fill="#111"/><rect x="550.0" y="219.0" width="5.34" height="5.342" fill="#fdfcfc"/><rect x="550.4" y="218.4" width="3.6" height="2.2" rx="0.6" fill="#111"/><rect x="550.0" y="229.7" width="5.34" height="5.342" fill="#fdfcfc"/><rect x="550.4" y="229.1" width="3.6" height="2.2" rx="0.6" fill="#111"/><rect x="550.0" y="240.4" width="5.34" height="5.342" fill="#fdfcfc"/><rect x="550.4" y="239.8" width="3.6" height="2.2" rx="0.6" fill="#111"/><rect x="550.0" y="251.1" width="5.34" height="5.342" fill="#fdfcfc"/><rect x="550.4" y="250.5" width="3.6" height="2.2" rx="0.6" fill="#111"/><rect x="550.0" y="261.8" width="5.34" height="5.342" fill="#fdfcfc"/><rect x="550.4" y="261.2" width="3.6" height="2.2" rx="0.6" fill="#111"/><rect x="550.0" y="331.2" width="5.34" height="5.342" fill="#fdfcfc"/><rect x="550.4" y="330.6" width="3.6" height="2.2" rx="0.6" fill="#111"/><rect x="550.0" y="341.9" width="5.34" height="5.342" fill="#fdfcfc"/><rect x="550.4" y="341.3" width="3.6" height="2.2" rx="0.6" fill="#111"/><rect x="550.0" y="352.6" width="5.34" height="5.342" fill="#fdfcfc"/><rect x="550.4" y="352.0" width="3.6" height="2.2" rx="0.6" fill="#111"/><rect x="220.0" y="150.9" width="3.0" height="14.0" fill="#6f6ac4" stroke="#2a2848" stroke-width="1"/><rect x="220.0" y="166.8" width="3.0" height="14.0" fill="#6f6ac4" stroke="#2a2848" stroke-width="1"/><rect x="220.0" y="182.8" width="3.0" height="14.0" fill="#6f6ac4" stroke="#2a2848" stroke-width="1"/><rect x="220.0" y="198.7" width="3.0" height="14.0" fill="#6f6ac4" stroke="#2a2848" stroke-width="1"/><rect x="220.0" y="214.7" width="3.0" height="14.0" fill="#6f6ac4" stroke="#2a2848" stroke-width="1"/><rect x="220.0" y="230.6" width="3.0" height="14.0" fill="#6f6ac4" stroke="#2a2848" stroke-width="1"/><rect x="220.0" y="246.6" width="3.0" height="14.0" fill="#6f6ac4" stroke="#2a2848" stroke-width="1"/><rect x="220.0" y="262.5" width="3.0" height="14.0" fill="#6f6ac4" stroke="#2a2848" stroke-width="1"/><rect x="220.0" y="278.5" width="3.0" height="14.0" fill="#6f6ac4" stroke="#2a2848" stroke-width="1"/><rect x="263.1" y="134.9" width="3.0" height="14.0" fill="#6f6ac4" stroke="#2a2848" stroke-width="1"/><rect x="263.1" y="150.8" width="3.0" height="14.0" fill="#6f6ac4" stroke="#2a2848" stroke-width="1"/><rect x="263.1" y="166.8" width="3.0" height="14.0" fill="#6f6ac4" stroke="#2a2848" stroke-width="1"/><rect x="263.1" y="182.7" width="3.0" height="14.0" fill="#6f6ac4" stroke="#2a2848" stroke-width="1"/><rect x="263.1" y="198.7" width="3.0" height="14.0" fill="#6f6ac4" stroke="#2a2848" stroke-width="1"/><rect x="263.1" y="214.6" width="3.0" height="14.0" fill="#6f6ac4" stroke="#2a2848" stroke-width="1"/><rect x="263.1" y="230.6" width="3.0" height="14.0" fill="#6f6ac4" stroke="#2a2848" stroke-width="1"/><rect x="263.1" y="246.5" width="3.0" height="14.0" fill="#6f6ac4" stroke="#2a2848" stroke-width="1"/><rect x="263.1" y="262.5" width="3.0" height="14.0" fill="#6f6ac4" stroke="#2a2848" stroke-width="1"/><rect x="289.3" y="134.9" width="3.0" height="14.0" fill="#6f6ac4" stroke="#2a2848" stroke-width="1"/><rect x="289.3" y="150.8" width="3.0" height="14.0" fill="#6f6ac4" stroke="#2a2848" stroke-width="1"/><rect x="289.3" y="166.8" width="3.0" height="14.0" fill="#6f6ac4" stroke="#2a2848" stroke-width="1"/><rect x="289.3" y="182.7" width="3.0" height="14.0" fill="#6f6ac4" stroke="#2a2848" stroke-width="1"/><rect x="289.3" y="198.7" width="3.0" height="14.0" fill="#6f6ac4" stroke="#2a2848" stroke-width="1"/><rect x="289.3" y="214.6" width="3.0" height="14.0" fill="#6f6ac4" stroke="#2a2848" stroke-width="1"/><rect x="289.3" y="230.6" width="3.0" height="14.0" fill="#6f6ac4" stroke="#2a2848" stroke-width="1"/><rect x="289.3" y="246.5" width="3.0" height="14.0" fill="#6f6ac4" stroke="#2a2848" stroke-width="1"/><rect x="289.3" y="262.5" width="3.0" height="14.0" fill="#6f6ac4" stroke="#2a2848" stroke-width="1"/><rect x="332.4" y="182.9" width="3.0" height="14.0" fill="#6f6ac4" stroke="#2a2848" stroke-width="1"/><rect x="332.4" y="198.8" width="3.0" height="14.0" fill="#6f6ac4" stroke="#2a2848" stroke-width="1"/><rect x="332.4" y="214.8" width="3.0" height="14.0" fill="#6f6ac4" stroke="#2a2848" stroke-width="1"/><rect x="332.4" y="230.7" width="3.0" height="14.0" fill="#6f6ac4" stroke="#2a2848" stroke-width="1"/><rect x="251.8" y="187.9" width="3.0" height="3.0" fill="#a86a5e" stroke="#3a2c2c" stroke-width="1"/><rect x="257.1" y="187.9" width="3.0" height="3.0" fill="#a86a5e" stroke="#3a2c2c" stroke-width="1"/><rect x="267.6" y="187.9" width="3.0" height="3.0" fill="#a86a5e" stroke="#3a2c2c" stroke-width="1"/><rect x="272.8" y="187.9" width="3.0" height="3.0" fill="#a86a5e" stroke="#3a2c2c" stroke-width="1"/><rect x="278.1" y="187.9" width="3.0" height="3.0" fill="#a86a5e" stroke="#3a2c2c" stroke-width="1"/><rect x="251.8" y="193.2" width="3.0" height="3.0" fill="#a86a5e" stroke="#3a2c2c" stroke-width="1"/><rect x="257.1" y="193.2" width="3.0" height="3.0" fill="#a86a5e" stroke="#3a2c2c" stroke-width="1"/><rect x="267.6" y="193.2" width="3.0" height="3.0" fill="#a86a5e" stroke="#3a2c2c" stroke-width="1"/><rect x="272.8" y="193.2" width="3.0" height="3.0" fill="#a86a5e" stroke="#3a2c2c" stroke-width="1"/><rect x="278.1" y="193.2" width="3.0" height="3.0" fill="#a86a5e" stroke="#3a2c2c" stroke-width="1"/><rect x="235.2" y="203.7" width="3.0" height="3.0" fill="#a86a5e" stroke="#3a2c2c" stroke-width="1"/><rect x="251.8" y="203.7" width="3.0" height="3.0" fill="#a86a5e" stroke="#3a2c2c" stroke-width="1"/><rect x="267.6" y="203.7" width="3.0" height="3.0" fill="#a86a5e" stroke="#3a2c2c" stroke-width="1"/><rect x="272.8" y="203.7" width="3.0" height="3.0" fill="#a86a5e" stroke="#3a2c2c" stroke-width="1"/><rect x="278.1" y="203.7" width="3.0" height="3.0" fill="#a86a5e" stroke="#3a2c2c" stroke-width="1"/><rect x="224.6" y="208.9" width="3.0" height="3.0" fill="#a86a5e" stroke="#3a2c2c" stroke-width="1"/><rect x="229.9" y="208.9" width="3.0" height="3.0" fill="#a86a5e" stroke="#3a2c2c" stroke-width="1"/><rect x="235.2" y="208.9" width="3.0" height="3.0" fill="#a86a5e" stroke="#3a2c2c" stroke-width="1"/><rect x="245.7" y="208.9" width="3.0" height="3.0" fill="#a86a5e" stroke="#3a2c2c" stroke-width="1"/><rect x="251.8" y="208.9" width="3.0" height="3.0" fill="#a86a5e" stroke="#3a2c2c" stroke-width="1"/><rect x="257.1" y="208.9" width="3.0" height="3.0" fill="#a86a5e" stroke="#3a2c2c" stroke-width="1"/><rect x="267.6" y="208.9" width="3.0" height="3.0" fill="#a86a5e" stroke="#3a2c2c" stroke-width="1"/><rect x="272.8" y="208.9" width="3.0" height="3.0" fill="#a86a5e" stroke="#3a2c2c" stroke-width="1"/><rect x="278.1" y="208.9" width="3.0" height="3.0" fill="#a86a5e" stroke="#3a2c2c" stroke-width="1"/><rect x="283.4" y="208.9" width="3.0" height="3.0" fill="#a86a5e" stroke="#3a2c2c" stroke-width="1"/><rect x="224.6" y="214.3" width="3.0" height="3.0" fill="#a86a5e" stroke="#3a2c2c" stroke-width="1"/><rect x="229.9" y="214.3" width="3.0" height="3.0" fill="#a86a5e" stroke="#3a2c2c" stroke-width="1"/><rect x="235.2" y="214.3" width="3.0" height="3.0" fill="#a86a5e" stroke="#3a2c2c" stroke-width="1"/><rect x="245.7" y="214.3" width="3.0" height="3.0" fill="#a86a5e" stroke="#3a2c2c" stroke-width="1"/><rect x="251.8" y="214.3" width="3.0" height="3.0" fill="#a86a5e" stroke="#3a2c2c" stroke-width="1"/><rect x="257.1" y="214.3" width="3.0" height="3.0" fill="#a86a5e" stroke="#3a2c2c" stroke-width="1"/><rect x="267.6" y="214.3" width="3.0" height="3.0" fill="#a86a5e" stroke="#3a2c2c" stroke-width="1"/><rect x="272.8" y="214.3" width="3.0" height="3.0" fill="#a86a5e" stroke="#3a2c2c" stroke-width="1"/><rect x="278.1" y="214.3" width="3.0" height="3.0" fill="#a86a5e" stroke="#3a2c2c" stroke-width="1"/><rect x="283.4" y="214.3" width="3.0" height="3.0" fill="#a86a5e" stroke="#3a2c2c" stroke-width="1"/><rect x="294.7" y="214.3" width="3.0" height="3.0" fill="#a86a5e" stroke="#3a2c2c" stroke-width="1"/><rect x="224.6" y="219.4" width="3.0" height="3.0" fill="#a86a5e" stroke="#3a2c2c" stroke-width="1"/><rect x="229.9" y="219.4" width="3.0" height="3.0" fill="#a86a5e" stroke="#3a2c2c" stroke-width="1"/><rect x="235.2" y="219.4" width="3.0" height="3.0" fill="#a86a5e" stroke="#3a2c2c" stroke-width="1"/><rect x="245.7" y="219.4" width="3.0" height="3.0" fill="#a86a5e" stroke="#3a2c2c" stroke-width="1"/><rect x="251.8" y="219.4" width="3.0" height="3.0" fill="#a86a5e" stroke="#3a2c2c" stroke-width="1"/><rect x="257.1" y="219.4" width="3.0" height="3.0" fill="#a86a5e" stroke="#3a2c2c" stroke-width="1"/><rect x="267.6" y="219.4" width="3.0" height="3.0" fill="#a86a5e" stroke="#3a2c2c" stroke-width="1"/><rect x="272.8" y="219.4" width="3.0" height="3.0" fill="#a86a5e" stroke="#3a2c2c" stroke-width="1"/><rect x="278.1" y="219.4" width="3.0" height="3.0" fill="#a86a5e" stroke="#3a2c2c" stroke-width="1"/><rect x="283.4" y="219.4" width="3.0" height="3.0" fill="#a86a5e" stroke="#3a2c2c" stroke-width="1"/><rect x="294.7" y="219.4" width="3.0" height="3.0" fill="#a86a5e" stroke="#3a2c2c" stroke-width="1"/><rect x="229.9" y="224.8" width="3.0" height="3.0" fill="#a86a5e" stroke="#3a2c2c" stroke-width="1"/><rect x="235.2" y="224.8" width="3.0" height="3.0" fill="#a86a5e" stroke="#3a2c2c" stroke-width="1"/><rect x="245.7" y="224.8" width="3.0" height="3.0" fill="#a86a5e" stroke="#3a2c2c" stroke-width="1"/><rect x="251.8" y="224.8" width="3.0" height="3.0" fill="#a86a5e" stroke="#3a2c2c" stroke-width="1"/><rect x="257.1" y="224.8" width="3.0" height="3.0" fill="#a86a5e" stroke="#3a2c2c" stroke-width="1"/><rect x="267.6" y="224.8" width="3.0" height="3.0" fill="#a86a5e" stroke="#3a2c2c" stroke-width="1"/><rect x="272.8" y="224.8" width="3.0" height="3.0" fill="#a86a5e" stroke="#3a2c2c" stroke-width="1"/><rect x="278.1" y="224.8" width="3.0" height="3.0" fill="#a86a5e" stroke="#3a2c2c" stroke-width="1"/><rect x="283.4" y="224.8" width="3.0" height="3.0" fill="#a86a5e" stroke="#3a2c2c" stroke-width="1"/><rect x="235.2" y="230.8" width="3.0" height="3.0" fill="#a86a5e" stroke="#3a2c2c" stroke-width="1"/><rect x="251.8" y="230.8" width="3.0" height="3.0" fill="#a86a5e" stroke="#3a2c2c" stroke-width="1"/><rect x="257.1" y="230.8" width="3.0" height="3.0" fill="#a86a5e" stroke="#3a2c2c" stroke-width="1"/><rect x="267.6" y="230.8" width="3.0" height="3.0" fill="#a86a5e" stroke="#3a2c2c" stroke-width="1"/><rect x="283.4" y="230.8" width="3.0" height="3.0" fill="#a86a5e" stroke="#3a2c2c" stroke-width="1"/><rect x="245.7" y="236.1" width="3.0" height="3.0" fill="#a86a5e" stroke="#3a2c2c" stroke-width="1"/><rect x="251.8" y="236.1" width="3.0" height="3.0" fill="#a86a5e" stroke="#3a2c2c" stroke-width="1"/><rect x="257.1" y="236.1" width="3.0" height="3.0" fill="#a86a5e" stroke="#3a2c2c" stroke-width="1"/><rect x="267.6" y="236.1" width="3.0" height="3.0" fill="#a86a5e" stroke="#3a2c2c" stroke-width="1"/><rect x="272.8" y="236.1" width="3.0" height="3.0" fill="#a86a5e" stroke="#3a2c2c" stroke-width="1"/><rect x="245.7" y="241.3" width="3.0" height="3.0" fill="#a86a5e" stroke="#3a2c2c" stroke-width="1"/><rect x="251.8" y="241.3" width="3.0" height="3.0" fill="#a86a5e" stroke="#3a2c2c" stroke-width="1"/><rect x="257.1" y="241.3" width="3.0" height="3.0" fill="#a86a5e" stroke="#3a2c2c" stroke-width="1"/><rect x="267.6" y="241.3" width="3.0" height="3.0" fill="#a86a5e" stroke="#3a2c2c" stroke-width="1"/><rect x="272.8" y="241.3" width="3.0" height="3.0" fill="#a86a5e" stroke="#3a2c2c" stroke-width="1"/><rect x="245.7" y="246.7" width="3.0" height="3.0" fill="#a86a5e" stroke="#3a2c2c" stroke-width="1"/><rect x="251.8" y="246.7" width="3.0" height="3.0" fill="#a86a5e" stroke="#3a2c2c" stroke-width="1"/><rect x="257.1" y="246.7" width="3.0" height="3.0" fill="#a86a5e" stroke="#3a2c2c" stroke-width="1"/><rect x="267.6" y="246.7" width="3.0" height="3.0" fill="#a86a5e" stroke="#3a2c2c" stroke-width="1"/><rect x="272.8" y="246.7" width="3.0" height="3.0" fill="#a86a5e" stroke="#3a2c2c" stroke-width="1"/><rect x="251.8" y="251.8" width="3.0" height="3.0" fill="#a86a5e" stroke="#3a2c2c" stroke-width="1"/><rect x="257.1" y="251.8" width="3.0" height="3.0" fill="#a86a5e" stroke="#3a2c2c" stroke-width="1"/><rect x="267.6" y="251.8" width="3.0" height="3.0" fill="#a86a5e" stroke="#3a2c2c" stroke-width="1"/><rect x="272.8" y="251.8" width="3.0" height="3.0" fill="#a86a5e" stroke="#3a2c2c" stroke-width="1"/><rect x="251.8" y="257.2" width="3.0" height="3.0" fill="#a86a5e" stroke="#3a2c2c" stroke-width="1"/><rect x="257.1" y="257.2" width="3.0" height="3.0" fill="#a86a5e" stroke="#3a2c2c" stroke-width="1"/><rect x="267.6" y="257.2" width="3.0" height="3.0" fill="#a86a5e" stroke="#3a2c2c" stroke-width="1"/><rect x="263.5" y="358.5" width="3.4" height="2.4" fill="#111"/><rect x="269.0" y="358.5" width="3.4" height="2.4" fill="#111"/><rect x="279.5" y="358.5" width="3.4" height="2.4" fill="#111"/></svg>
</div>
</body></html>
